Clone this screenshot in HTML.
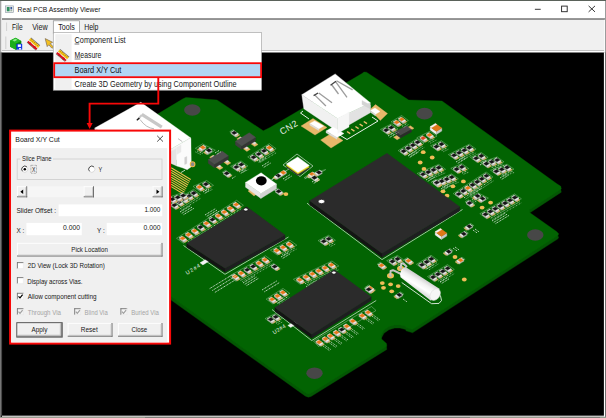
<!DOCTYPE html>
<html><head><meta charset="utf-8"><title>Real PCB Assembly Viewer</title>
<style>
html,body{margin:0;padding:0;background:#000;}
body{width:606px;height:418px;overflow:hidden;position:relative;font-family:"Liberation Sans",sans-serif;}
svg{position:absolute;left:0;top:0;display:block}
svg text{font-family:"Liberation Sans",sans-serif;}
</style></head><body>
<svg width="606" height="418" viewBox="0 0 606 418">
<rect x="0" y="0" width="606" height="418" fill="#000"/>
<g id="pcb">
<polygon points="362.0,76.7 364.0,75.2 366.5,75.4 408.7,103.2 442.0,104.2 556.5,186.7 560.8,189.5 561.3,192.2 529.6,213.0 529.6,215.7 556.5,234.7 558.7,236.9 558.0,238.8 412.6,332.8 406.0,330.8 405.6,329.5 400.0,328.1 394.8,328.1 389.0,329.7 384.0,333.2 380.9,338.9 381.5,342.2 386.5,346.7 386.8,349.5 311.0,396.5 308.3,397.2 305.5,396.2 171.7,300.5 60.0,221.2 100.0,150.2 159.7,116.0 183.0,102.0 186.0,100.6 217.0,103.2 263.3,134.0 270.0,130.7" fill="#045604" stroke="#045604" stroke-width="0.35" />
<polygon points="362.0,73.5 364.0,72.0 366.5,72.2 408.7,100.0 442.0,101.0 556.5,183.5 560.8,186.3 561.3,189.0 529.6,209.8 529.6,212.5 556.5,231.5 558.7,233.7 558.0,235.6 412.6,329.6 406.0,327.6 405.6,326.3 400.0,324.9 394.8,324.9 389.0,326.5 384.0,330.0 380.9,335.7 381.5,339.0 386.5,343.5 386.8,346.3 311.0,393.3 308.3,394.0 305.5,393.0 171.7,297.3 60.0,218.0 100.0,147.0 159.7,112.8 183.0,98.8 186.0,97.4 217.0,100.0 263.3,130.8 270.0,127.5" fill="#026402" stroke="#026402" stroke-width="0.35" />
<ellipse cx="192.3" cy="110.0" rx="8.2" ry="5.8" fill="#474747"/>
<ellipse cx="424.5" cy="113.6" rx="8.2" ry="5.8" fill="#474747"/>
<ellipse cx="535.3" cy="235.0" rx="8.2" ry="5.8" fill="#474747"/>
<ellipse cx="314.5" cy="373.2" rx="8.2" ry="5.8" fill="#474747"/>
<!--chips-->
<path d="M307.0 203.2 L382.0 259.6 L462.5 209.5" fill="none" stroke="#c4dcc4" stroke-width="0.8"/>
<path d="M183.5 245.5 L225.0 274.3 L288.5 237.0" fill="none" stroke="#c4dcc4" stroke-width="0.8"/>
<path d="M272.0 309.5 L311.7 340.6 L376.2 300.5" fill="none" stroke="#c4dcc4" stroke-width="0.8"/>
<polygon points="301.0,126.0 313.0,118.5 327.0,127.5 315.0,135.0" fill="#e8b86a" stroke="#e8b86a" stroke-width="0.35" />
<polygon points="320.6,140.0 332.0,133.0 343.0,140.5 331.0,148.0" fill="#e8b86a" stroke="#e8b86a" stroke-width="0.35" />
<polygon points="370.0,109.5 375.5,104.6 387.5,113.6 380.3,120.5" fill="#e8b86a" stroke="#e8b86a" stroke-width="0.35" />
<path d="M303 111 L300.5 113 L309 119 M338 134 L347 139.5 L378 121 L372 117" stroke="#e8f0e8" stroke-width="1" fill="none"/>
<path d="M347.0 131.5 l3.2 2.2" stroke="#f0c070" stroke-width="1.4"/>
<path d="M351.2 129.0 l3.2 2.2" stroke="#f0c070" stroke-width="1.4"/>
<path d="M355.4 126.5 l3.2 2.2" stroke="#f0c070" stroke-width="1.4"/>
<path d="M359.6 124.0 l3.2 2.2" stroke="#f0c070" stroke-width="1.4"/>
<path d="M363.8 121.5 l3.2 2.2" stroke="#f0c070" stroke-width="1.4"/>
<polygon points="301.8,94.7 337.6,118.5 337.6,131.5 303.8,108.7" fill="#f1f1f1" stroke="#f1f1f1" stroke-width="0.35" />
<polygon points="337.6,118.5 370.3,102.7 370.3,112.7 337.6,131.5" fill="#e2e2e2" stroke="#e2e2e2" stroke-width="0.35" />
<polygon points="335.2,73.9 370.3,102.7 337.6,118.5 301.8,94.7" fill="#ffffff" stroke="#ffffff" stroke-width="0.35" />
<polygon points="309.8,123.5 314.7,120.9 323.7,126.1 318.7,128.9" fill="#ffffff" stroke="#ffffff" stroke-width="0.35" />
<polygon points="309.8,123.5 318.7,128.9 318.7,130.6 309.8,125.2" fill="#dcdcdc" stroke="#dcdcdc" stroke-width="0.35" />
<polygon points="326.0,131.0 333.0,127.0 344.0,133.5 337.0,137.5" fill="#ffffff" stroke="#ffffff" stroke-width="0.35" />
<polygon points="326.0,131.0 337.0,137.5 337.0,139.3 326.0,132.8" fill="#dcdcdc" stroke="#dcdcdc" stroke-width="0.35" />
<polygon points="337.6,118.5 349.0,112.0 349.0,127.0 337.6,133.5" fill="#f6f6f6" stroke="#f6f6f6" stroke-width="0.35" />
<polygon points="370.3,110.5 375.0,108.0 380.0,111.5 375.5,114.3" fill="#ffffff" stroke="#ffffff" stroke-width="0.35" />
<polygon points="370.3,110.5 375.5,114.3 375.5,116.0 370.3,112.2" fill="#d8d8d8" stroke="#d8d8d8" stroke-width="0.35" />
<path d="M314.6 94.9 L325.9 106.0" stroke="#9c9c9c" stroke-width="1.3" fill="none"/>
<path d="M318.8 92.9 L332.0 102.7" stroke="#9c9c9c" stroke-width="1.3" fill="none"/>
<path d="M331.5 84.5 L338.5 94.0" stroke="#9c9c9c" stroke-width="1.3" fill="none"/>
<path d="M335.4 81.3 L347.0 97.4" stroke="#9c9c9c" stroke-width="1.3" fill="none"/>
<path d="M336.5 80.8 L352.6 89.9" stroke="#9c9c9c" stroke-width="1.3" fill="none"/>
<path d="M313.6 95.6 l4.5 -2.6 M330.5 85.2 l5.5 -4" stroke="#444" stroke-width="1.3"/>
<polygon points="362.0,100.5 370.3,105.0 370.3,109.0 362.0,104.5" fill="#d4d4d4" stroke="#d4d4d4" stroke-width="0.35" />
<text x="0" y="0" transform="translate(282,135) rotate(-31)" font-family="Liberation Sans, sans-serif" font-size="9" fill="#e8f0e8" textLength="19">CN2</text>
<polygon points="94.8,128.0 145.0,164.0 145.0,178.0 94.8,142.0" fill="#ededed" stroke="#ededed" stroke-width="0.35" />
<polygon points="145.0,164.0 190.5,137.7 190.5,151.7 145.0,178.0" fill="#f2f2f2" stroke="#f2f2f2" stroke-width="0.35" />
<polygon points="140.8,102.3 190.5,137.7 145.0,164.0 94.8,128.0" fill="#ffffff" stroke="#ffffff" stroke-width="0.35" />
<polygon points="171.0,151.5 176.7,148.2 176.7,166.0 171.0,163.4" fill="#e4e4e4" stroke="#e4e4e4" stroke-width="0.35" />
<polygon points="176.7,147.0 190.9,138.3 191.3,166.8 187.2,169.7 183.0,168.0 176.7,166.0" fill="#fbfbfb" stroke="#fbfbfb" stroke-width="0.35" />
<polygon points="184.7,157.5 186.8,156.5 186.8,163.6 184.7,164.6" fill="#cfcfcf" stroke="#cfcfcf" stroke-width="0.35" />
<polygon points="176.7,147.5 181.0,145.0 181.0,152.0 176.7,154.5" fill="#e9e9e9" stroke="#e9e9e9" stroke-width="0.35" />
<path d="M178 138.6 L182.3 141.6" stroke="#bdbdbd" stroke-width="1" fill="none"/>
<path d="M180.9 172.6 L185.1 170.1" stroke="#e8f0e8" stroke-width="0.8" fill="none"/>
<path d="M141.8 114.3 L161.8 127.2" stroke="#c8c8c8" stroke-width="3.2" fill="none"/>
<path d="M138 119.3 L141.8 114.8" stroke="#c8c8c8" stroke-width="2" fill="none"/>
<path d="M136.8 120.3 l2.6 -2.4" stroke="#1a1a1a" stroke-width="1.3"/>
<path d="M140 119.5 Q146 128 154 128.8" stroke="#a8a8a8" stroke-width="0.8" fill="none"/>
<ellipse cx="192.6" cy="164.3" rx="2.3" ry="2.5" fill="#8a8a8a" stroke="#f0b848" stroke-width="1.1"/>
<path d="M171.2 167.8 l19.5 11.7" stroke="#f0bc50" stroke-width="1.05"/>
<path d="M171.2 170.2 l18.6 11.2" stroke="#f0bc50" stroke-width="1.05"/>
<path d="M171.2 172.5 l17.7 10.6" stroke="#f0bc50" stroke-width="1.05"/>
<path d="M171.2 174.9 l16.8 10.1" stroke="#f0bc50" stroke-width="1.05"/>
<path d="M171.2 177.2 l15.9 9.5" stroke="#f0bc50" stroke-width="1.05"/>
<path d="M171.2 179.6 l15.0 9.0" stroke="#f0bc50" stroke-width="1.05"/>
<path d="M171.2 181.9 l14.1 8.5" stroke="#f0bc50" stroke-width="1.05"/>
<path d="M171.2 184.2 l13.2 7.9" stroke="#f0bc50" stroke-width="1.05"/>
<path d="M171.2 186.6 l12.3 7.4" stroke="#f0bc50" stroke-width="1.05"/>
<defs><linearGradient id="cg" gradientUnits="userSpaceOnUse" x1="422.5" y1="277.8" x2="415.8" y2="289"><stop offset="0" stop-color="#cfcfcf"/><stop offset="0.35" stop-color="#f2f2f2"/><stop offset="0.7" stop-color="#ffffff"/><stop offset="1" stop-color="#e2e2e2"/></linearGradient></defs>
<path d="M401.7 282.5 L431.6 303.7 L439 303.4 L441.5 300.5 L440.4 295.4" stroke="#e8f0e8" stroke-width="0.9" fill="none"/>
<ellipse cx="390.5" cy="275.8" rx="3.5" ry="2.7" fill="#f0bc58"/><ellipse cx="390.5" cy="275.8" rx="1.5" ry="1.1" fill="#b8b8b8"/>
<ellipse cx="400.6" cy="268.4" rx="3.5" ry="2.7" fill="#f0bc58"/><ellipse cx="400.6" cy="268.4" rx="1.5" ry="1.1" fill="#b8b8b8"/>
<path d="M390.3 275.5 L390.6 271 L393 270.2 L402 274.5" stroke="#c4c4c4" stroke-width="2" fill="none" stroke-linejoin="round"/>
<path d="M400.6 268 L401.3 263.6 L403.2 263.2 L407 267" stroke="#c4c4c4" stroke-width="2" fill="none" stroke-linejoin="round"/>
<path d="M405.2 266.7 L439.8 289 L431 300.7 L400.5 277.3 Q398.5 270.5 405.2 266.7 Z" fill="url(#cg)"/>
<ellipse cx="435.2" cy="294.6" rx="4.6" ry="6.3" transform="rotate(35.4 435.2 294.6)" fill="#f6f6f6" stroke="#dcdcdc" stroke-width="0.5"/>
<polygon points="248.0,191.0 252.0,188.5 258.0,193.0 254.0,196.0" fill="#e8b86a" stroke="#e8b86a" stroke-width="0.35" />
<polygon points="245.5,182.4 260.9,193.6 260.9,198.4 245.5,187.2" fill="#e6e6e6" stroke="#e6e6e6" stroke-width="0.35" />
<polygon points="260.9,193.6 276.5,184.0 276.5,188.8 260.9,198.4" fill="#d2d2d2" stroke="#d2d2d2" stroke-width="0.35" />
<polygon points="261.1,172.8 276.5,184.0 260.9,193.6 245.5,182.4" fill="#ffffff" stroke="#ffffff" stroke-width="0.35" />
<ellipse cx="261.3" cy="180.8" rx="5.4" ry="4.6" fill="#000"/>
<polygon points="297.0,154.0 313.0,166.0 300.0,176.5 283.0,165.0" fill="none" stroke="#cfe0cf" stroke-width="0.7"/>
<polygon points="297.7,160.1 309.4,168.6 297.9,175.7 286.2,167.2" fill="#333" stroke="#333" stroke-width="0.35" />
<polygon points="297.7,158.5 309.4,167.0 297.9,174.1 286.2,165.6" fill="#e8d820" stroke="#e8d820" stroke-width="0.35" />
<polygon points="297.7,156.9 309.4,165.4 297.9,172.5 286.2,164.0" fill="#ffffff" stroke="#ffffff" stroke-width="0.35" />
<polygon points="240.2,136.8 244.1,139.6 240.7,141.7 236.8,138.9" fill="#e8b86a" stroke="#e8b86a" stroke-width="0.35" />
<polygon points="254.2,141.7 258.1,144.5 254.7,146.6 250.8,143.8" fill="#e8b86a" stroke="#e8b86a" stroke-width="0.35" />
<polygon points="246.4,146.5 250.3,149.3 246.9,151.4 243.0,148.6" fill="#e8b86a" stroke="#e8b86a" stroke-width="0.35" />
<polygon points="240.9,137.1 243.8,139.3 241.7,140.5 238.8,138.4" fill="#dcdcdc" stroke="#dcdcdc" stroke-width="0.35" />
<polygon points="253.3,141.0 256.3,143.1 254.2,144.4 251.3,142.3" fill="#dcdcdc" stroke="#dcdcdc" stroke-width="0.35" />
<polygon points="245.5,145.8 248.4,147.9 246.4,149.2 243.5,147.0" fill="#dcdcdc" stroke="#dcdcdc" stroke-width="0.35" />
<polygon points="235.4,141.3 241.7,145.9 241.7,149.5 235.4,144.9" fill="#3e3e3e" stroke="#3e3e3e" stroke-width="0.35" />
<polygon points="241.7,145.9 255.6,137.3 255.6,140.9 241.7,149.5" fill="#343434" stroke="#343434" stroke-width="0.35" />
<polygon points="249.3,132.7 255.6,137.3 241.7,145.9 235.4,141.3" fill="#4e4e4e" stroke="#4e4e4e" stroke-width="0.35" />
<polygon points="213.0,155.2 216.9,158.0 213.5,160.1 209.6,157.3" fill="#e8b86a" stroke="#e8b86a" stroke-width="0.35" />
<polygon points="227.0,160.1 230.9,162.9 227.5,165.0 223.6,162.2" fill="#e8b86a" stroke="#e8b86a" stroke-width="0.35" />
<polygon points="219.2,164.9 223.1,167.7 219.7,169.8 215.8,167.0" fill="#e8b86a" stroke="#e8b86a" stroke-width="0.35" />
<polygon points="213.7,155.5 216.6,157.7 214.5,158.9 211.6,156.8" fill="#dcdcdc" stroke="#dcdcdc" stroke-width="0.35" />
<polygon points="226.1,159.4 229.1,161.5 227.0,162.8 224.1,160.7" fill="#dcdcdc" stroke="#dcdcdc" stroke-width="0.35" />
<polygon points="218.3,164.2 221.2,166.3 219.2,167.6 216.3,165.4" fill="#dcdcdc" stroke="#dcdcdc" stroke-width="0.35" />
<polygon points="208.2,159.7 214.5,164.3 214.5,167.9 208.2,163.3" fill="#3e3e3e" stroke="#3e3e3e" stroke-width="0.35" />
<polygon points="214.5,164.3 228.4,155.7 228.4,159.3 214.5,167.9" fill="#343434" stroke="#343434" stroke-width="0.35" />
<polygon points="222.1,151.1 228.4,155.7 214.5,164.3 208.2,159.7" fill="#4e4e4e" stroke="#4e4e4e" stroke-width="0.35" />
<polygon points="396.9,135.2 400.5,137.8 397.1,139.8 393.5,137.2" fill="#e8b86a" stroke="#e8b86a" stroke-width="0.35" />
<polygon points="410.4,125.7 414.0,128.3 410.6,130.3 407.0,127.7" fill="#e8b86a" stroke="#e8b86a" stroke-width="0.35" />
<polygon points="395.5,131.5 406.5,125.8 411.5,129.5 400.5,135.6" fill="#4a4a4a" stroke="#4a4a4a" stroke-width="0.35" />
<polygon points="395.5,131.5 400.5,135.6 400.5,138.0 395.5,134.0" fill="#333" stroke="#333" stroke-width="0.35" />
<polygon points="400.5,135.6 411.5,129.5 411.5,132.0 400.5,138.0" fill="#2b2b2b" stroke="#2b2b2b" stroke-width="0.35" />
<polygon points="430.2,126.9 436.4,131.4 436.4,134.4 430.2,129.9" fill="#f0f0f0" stroke="#f0f0f0" stroke-width="0.35" />
<polygon points="436.4,131.4 441.8,128.1 441.8,131.1 436.4,134.4" fill="#c8c8c8" stroke="#c8c8c8" stroke-width="0.35" />
<polygon points="435.6,123.6 441.8,128.1 436.4,131.4 430.2,126.9" fill="#e07818" stroke="#e07818" stroke-width="0.35" />
<polygon points="435.4,123.4 436.8,124.5 431.4,127.8 430.0,126.7" fill="#f4f4f4" stroke="#f4f4f4" stroke-width="0.35" />
<polygon points="435.2,231.9 441.4,236.4 441.4,239.4 435.2,234.9" fill="#f0f0f0" stroke="#f0f0f0" stroke-width="0.35" />
<polygon points="441.4,236.4 446.8,233.1 446.8,236.1 441.4,239.4" fill="#c8c8c8" stroke="#c8c8c8" stroke-width="0.35" />
<polygon points="440.6,228.6 446.8,233.1 441.4,236.4 435.2,231.9" fill="#e07818" stroke="#e07818" stroke-width="0.35" />
<polygon points="440.4,228.4 441.8,229.5 436.4,232.8 435.0,231.7" fill="#f4f4f4" stroke="#f4f4f4" stroke-width="0.35" />
<polygon points="202.5,143.9 215.3,150.2 208.1,154.6 195.3,148.3" fill="none" stroke="#cfe6cf" stroke-opacity="0.55" stroke-width="0.6"/>
<polygon points="199.7,148.1 202.4,150.1 200.2,151.4 197.5,149.4" fill="#e8b050" stroke="#e8b050" stroke-width="0.35" />
<polygon points="203.5,146.4 206.3,148.4 201.5,151.4 198.7,149.4" fill="#b8b8b0" stroke="#b8b8b0" stroke-width="0.35" />
<polygon points="203.5,145.1 206.3,147.1 201.5,150.1 198.7,148.1" fill="#ececec" stroke="#ececec" stroke-width="0.35" />
<polygon points="202.8,145.6 205.5,147.6 202.8,149.3 200.1,147.2" fill="#e8781a" stroke="#e8781a" stroke-width="0.35" />
<polygon points="205.8,151.1 208.5,153.1 206.3,154.4 203.6,152.4" fill="#e8b050" stroke="#e8b050" stroke-width="0.35" />
<polygon points="209.6,149.4 212.4,151.4 207.6,154.4 204.8,152.4" fill="#b8b8b0" stroke="#b8b8b0" stroke-width="0.35" />
<polygon points="209.6,148.1 212.4,150.1 207.6,153.1 204.8,151.1" fill="#ececec" stroke="#ececec" stroke-width="0.35" />
<polygon points="208.9,148.6 211.6,150.6 208.9,152.3 206.2,150.2" fill="#151515" stroke="#151515" stroke-width="0.35" />
<path d="M197.1 150.9 L203.2 153.9" stroke="#e4efe4" stroke-opacity="0.75" stroke-width="1" stroke-dasharray="1.2 0.8 0.6 0.8" fill="none"/>
<path d="M195.4 151.9 L201.5 154.9" stroke="#e4efe4" stroke-opacity="0.55" stroke-width="1" stroke-dasharray="1.2 0.8 0.6 0.8" fill="none"/>
<polygon points="229.8,131.7 232.9,129.7 239.7,134.7 236.5,136.6" fill="none" stroke="#cfe6cf" stroke-opacity="0.55" stroke-width="0.6"/>
<polygon points="237.3,133.7 239.4,135.2 236.5,137.0 234.4,135.5" fill="#e8b050" stroke="#e8b050" stroke-width="0.35" />
<polygon points="233.6,131.7 238.3,135.1 235.4,136.9 230.7,133.5" fill="#b8b8b0" stroke="#b8b8b0" stroke-width="0.35" />
<polygon points="233.6,130.4 238.3,133.8 235.4,135.6 230.7,132.2" fill="#ececec" stroke="#ececec" stroke-width="0.35" />
<polygon points="234.4,131.0 237.0,132.9 234.1,134.6 231.5,132.7" fill="#151515" stroke="#151515" stroke-width="0.35" />
<polygon points="247.7,156.9 269.3,143.7 276.1,148.7 254.5,161.8" fill="none" stroke="#cfe6cf" stroke-opacity="0.55" stroke-width="0.6"/>
<polygon points="256.6,158.1 258.7,159.6 255.8,161.4 253.7,159.9" fill="#e8b050" stroke="#e8b050" stroke-width="0.35" />
<polygon points="252.9,156.1 257.6,159.5 254.7,161.3 250.0,157.9" fill="#b8b8b0" stroke="#b8b8b0" stroke-width="0.35" />
<polygon points="252.9,154.8 257.6,158.2 254.7,160.0 250.0,156.6" fill="#ececec" stroke="#ececec" stroke-width="0.35" />
<polygon points="253.7,155.4 256.3,157.3 253.4,159.0 250.8,157.1" fill="#151515" stroke="#151515" stroke-width="0.35" />
<polygon points="261.9,154.9 264.0,156.4 261.1,158.2 259.0,156.7" fill="#e8b050" stroke="#e8b050" stroke-width="0.35" />
<polygon points="258.2,152.9 262.8,156.3 259.9,158.1 255.3,154.7" fill="#b8b8b0" stroke="#b8b8b0" stroke-width="0.35" />
<polygon points="258.2,151.6 262.8,155.0 259.9,156.8 255.3,153.4" fill="#ececec" stroke="#ececec" stroke-width="0.35" />
<polygon points="258.9,152.2 261.5,154.1 258.6,155.8 256.1,153.9" fill="#151515" stroke="#151515" stroke-width="0.35" />
<polygon points="267.1,151.7 269.3,153.2 266.4,155.0 264.3,153.5" fill="#e8b050" stroke="#e8b050" stroke-width="0.35" />
<polygon points="263.5,149.7 268.1,153.1 265.2,154.9 260.6,151.5" fill="#b8b8b0" stroke="#b8b8b0" stroke-width="0.35" />
<polygon points="263.5,148.4 268.1,151.8 265.2,153.6 260.6,150.2" fill="#ececec" stroke="#ececec" stroke-width="0.35" />
<polygon points="264.2,149.0 266.8,150.9 263.9,152.6 261.3,150.7" fill="#151515" stroke="#151515" stroke-width="0.35" />
<polygon points="272.4,148.5 274.5,150.0 271.6,151.8 269.5,150.3" fill="#e8b050" stroke="#e8b050" stroke-width="0.35" />
<polygon points="268.7,146.5 273.4,149.9 270.5,151.7 265.8,148.3" fill="#b8b8b0" stroke="#b8b8b0" stroke-width="0.35" />
<polygon points="268.7,145.2 273.4,148.6 270.5,150.4 265.8,147.0" fill="#ececec" stroke="#ececec" stroke-width="0.35" />
<polygon points="269.5,145.8 272.1,147.7 269.2,149.4 266.6,147.5" fill="#e8781a" stroke="#e8781a" stroke-width="0.35" />
<path d="M258.9 161.1 L274.7 151.5" stroke="#e4efe4" stroke-opacity="0.75" stroke-width="1" stroke-dasharray="1.2 0.8 0.6 0.8" fill="none"/>
<path d="M260.5 162.3 L276.3 152.7" stroke="#e4efe4" stroke-opacity="0.55" stroke-width="1" stroke-dasharray="1.2 0.8 0.6 0.8" fill="none"/>
<polygon points="230.6,166.3 241.1,161.0 247.9,166.0 237.4,171.2" fill="none" stroke="#cfe6cf" stroke-opacity="0.55" stroke-width="0.6"/>
<polygon points="239.3,167.9 241.4,169.4 238.5,171.2 236.4,169.7" fill="#e8b050" stroke="#e8b050" stroke-width="0.35" />
<polygon points="235.6,165.9 240.3,169.3 237.4,171.1 232.7,167.7" fill="#b8b8b0" stroke="#b8b8b0" stroke-width="0.35" />
<polygon points="235.6,164.6 240.3,168.0 237.4,169.8 232.7,166.4" fill="#ececec" stroke="#ececec" stroke-width="0.35" />
<polygon points="236.4,165.2 239.0,167.1 236.1,168.8 233.5,166.9" fill="#151515" stroke="#151515" stroke-width="0.35" />
<polygon points="244.3,165.4 246.4,166.9 243.5,168.7 241.4,167.2" fill="#e8b050" stroke="#e8b050" stroke-width="0.35" />
<polygon points="240.6,163.4 245.3,166.8 242.4,168.6 237.7,165.2" fill="#b8b8b0" stroke="#b8b8b0" stroke-width="0.35" />
<polygon points="240.6,162.1 245.3,165.5 242.4,167.3 237.7,163.9" fill="#ececec" stroke="#ececec" stroke-width="0.35" />
<polygon points="241.4,162.7 244.0,164.6 241.1,166.3 238.5,164.4" fill="#151515" stroke="#151515" stroke-width="0.35" />
<path d="M241.6 170.9 L246.6 168.4" stroke="#e4efe4" stroke-opacity="0.75" stroke-width="1" stroke-dasharray="1.2 0.8 0.6 0.8" fill="none"/>
<path d="M243.2 172.1 L248.2 169.6" stroke="#e4efe4" stroke-opacity="0.55" stroke-width="1" stroke-dasharray="1.2 0.8 0.6 0.8" fill="none"/>
<polygon points="222.3,172.2 225.4,170.2 232.2,175.2 229.0,177.1" fill="none" stroke="#cfe6cf" stroke-opacity="0.55" stroke-width="0.6"/>
<polygon points="229.8,174.2 231.9,175.7 229.0,177.5 226.9,176.0" fill="#e8b050" stroke="#e8b050" stroke-width="0.35" />
<polygon points="226.1,172.2 230.8,175.6 227.9,177.4 223.2,174.0" fill="#b8b8b0" stroke="#b8b8b0" stroke-width="0.35" />
<polygon points="226.1,170.9 230.8,174.3 227.9,176.1 223.2,172.7" fill="#ececec" stroke="#ececec" stroke-width="0.35" />
<polygon points="226.9,171.5 229.5,173.4 226.6,175.1 224.0,173.2" fill="#151515" stroke="#151515" stroke-width="0.35" />
<polygon points="193.0,186.4 206.7,180.5 213.5,185.4 199.8,191.4" fill="none" stroke="#cfe6cf" stroke-opacity="0.55" stroke-width="0.6"/>
<polygon points="202.6,187.9 204.7,189.4 201.8,191.2 199.7,189.7" fill="#e8b050" stroke="#e8b050" stroke-width="0.35" />
<polygon points="198.9,185.9 203.5,189.3 200.6,191.0 196.0,187.7" fill="#b8b8b0" stroke="#b8b8b0" stroke-width="0.35" />
<polygon points="198.9,184.6 203.5,188.0 200.6,189.7 196.0,186.4" fill="#ececec" stroke="#ececec" stroke-width="0.35" />
<polygon points="199.6,185.1 202.2,187.0 199.3,188.8 196.7,186.9" fill="#e8781a" stroke="#e8781a" stroke-width="0.35" />
<polygon points="209.1,185.0 211.2,186.6 208.3,188.3 206.2,186.8" fill="#e8b050" stroke="#e8b050" stroke-width="0.35" />
<polygon points="205.4,183.1 210.0,186.4 207.1,188.2 202.5,184.8" fill="#b8b8b0" stroke="#b8b8b0" stroke-width="0.35" />
<polygon points="205.4,181.8 210.0,185.1 207.1,186.9 202.5,183.5" fill="#ececec" stroke="#ececec" stroke-width="0.35" />
<polygon points="206.1,182.3 208.7,184.2 205.8,186.0 203.2,184.1" fill="#151515" stroke="#151515" stroke-width="0.35" />
<path d="M204.9 190.9 L211.4 188.0" stroke="#e4efe4" stroke-opacity="0.75" stroke-width="1" stroke-dasharray="1.2 0.8 0.6 0.8" fill="none"/>
<path d="M206.5 192.1 L213.0 189.2" stroke="#e4efe4" stroke-opacity="0.55" stroke-width="1" stroke-dasharray="1.2 0.8 0.6 0.8" fill="none"/>
<polygon points="168.8,204.6 193.6,189.3 200.4,194.3 175.6,209.5" fill="none" stroke="#cfe6cf" stroke-opacity="0.55" stroke-width="0.6"/>
<polygon points="177.5,206.0 179.6,207.5 176.7,209.3 174.6,207.7" fill="#e8b050" stroke="#e8b050" stroke-width="0.35" />
<polygon points="173.8,204.0 178.4,207.3 175.5,209.1 170.9,205.7" fill="#b8b8b0" stroke="#b8b8b0" stroke-width="0.35" />
<polygon points="173.8,202.7 178.4,206.0 175.5,207.8 170.9,204.4" fill="#ececec" stroke="#ececec" stroke-width="0.35" />
<polygon points="174.5,203.2 177.1,205.1 174.2,206.9 171.6,205.0" fill="#151515" stroke="#151515" stroke-width="0.35" />
<polygon points="182.3,203.0 184.4,204.5 181.5,206.3 179.4,204.7" fill="#e8b050" stroke="#e8b050" stroke-width="0.35" />
<polygon points="178.6,201.0 183.3,204.3 180.4,206.1 175.7,202.7" fill="#b8b8b0" stroke="#b8b8b0" stroke-width="0.35" />
<polygon points="178.6,199.7 183.3,203.0 180.4,204.8 175.7,201.4" fill="#ececec" stroke="#ececec" stroke-width="0.35" />
<polygon points="179.4,200.2 182.0,202.1 179.1,203.9 176.5,202.0" fill="#151515" stroke="#151515" stroke-width="0.35" />
<polygon points="187.2,200.0 189.3,201.5 186.4,203.3 184.3,201.7" fill="#e8b050" stroke="#e8b050" stroke-width="0.35" />
<polygon points="183.5,198.0 188.1,201.3 185.2,203.1 180.6,199.8" fill="#b8b8b0" stroke="#b8b8b0" stroke-width="0.35" />
<polygon points="183.5,196.7 188.1,200.0 185.2,201.8 180.6,198.5" fill="#ececec" stroke="#ececec" stroke-width="0.35" />
<polygon points="184.2,197.2 186.8,199.1 183.9,200.9 181.3,199.0" fill="#151515" stroke="#151515" stroke-width="0.35" />
<polygon points="192.0,197.0 194.1,198.5 191.2,200.3 189.1,198.7" fill="#e8b050" stroke="#e8b050" stroke-width="0.35" />
<polygon points="188.3,195.0 193.0,198.4 190.1,200.1 185.4,196.8" fill="#b8b8b0" stroke="#b8b8b0" stroke-width="0.35" />
<polygon points="188.3,193.7 193.0,197.1 190.1,198.8 185.4,195.5" fill="#ececec" stroke="#ececec" stroke-width="0.35" />
<polygon points="189.1,194.2 191.7,196.1 188.8,197.9 186.2,196.0" fill="#151515" stroke="#151515" stroke-width="0.35" />
<polygon points="196.9,194.0 199.0,195.5 196.1,197.3 194.0,195.7" fill="#e8b050" stroke="#e8b050" stroke-width="0.35" />
<polygon points="193.2,192.0 197.8,195.4 194.9,197.1 190.3,193.8" fill="#b8b8b0" stroke="#b8b8b0" stroke-width="0.35" />
<polygon points="193.2,190.7 197.8,194.1 194.9,195.8 190.3,192.5" fill="#ececec" stroke="#ececec" stroke-width="0.35" />
<polygon points="193.9,191.2 196.5,193.1 193.6,194.9 191.0,193.0" fill="#151515" stroke="#151515" stroke-width="0.35" />
<path d="M179.8 209.0 L199.2 197.0" stroke="#e4efe4" stroke-opacity="0.75" stroke-width="1" stroke-dasharray="1.2 0.8 0.6 0.8" fill="none"/>
<path d="M181.4 210.1 L200.8 198.2" stroke="#e4efe4" stroke-opacity="0.55" stroke-width="1" stroke-dasharray="1.2 0.8 0.6 0.8" fill="none"/>
<polygon points="176.5,238.3 236.6,200.3 243.4,205.3 183.3,243.2" fill="none" stroke="#cfe6cf" stroke-opacity="0.55" stroke-width="0.6"/>
<polygon points="185.7,239.2 187.8,240.7 184.9,242.5 182.8,241.0" fill="#e8b050" stroke="#e8b050" stroke-width="0.35" />
<polygon points="182.0,237.2 186.7,240.6 183.8,242.4 179.1,239.0" fill="#b8b8b0" stroke="#b8b8b0" stroke-width="0.35" />
<polygon points="182.0,235.9 186.7,239.3 183.8,241.1 179.1,237.7" fill="#ececec" stroke="#ececec" stroke-width="0.35" />
<polygon points="182.8,236.5 185.4,238.4 182.5,240.1 179.9,238.2" fill="#e8781a" stroke="#e8781a" stroke-width="0.35" />
<polygon points="191.7,235.5 193.8,237.0 190.9,238.8 188.8,237.2" fill="#e8b050" stroke="#e8b050" stroke-width="0.35" />
<polygon points="188.0,233.5 192.6,236.8 189.7,238.6 185.1,235.2" fill="#b8b8b0" stroke="#b8b8b0" stroke-width="0.35" />
<polygon points="188.0,232.2 192.6,235.5 189.7,237.3 185.1,233.9" fill="#ececec" stroke="#ececec" stroke-width="0.35" />
<polygon points="188.7,232.7 191.3,234.6 188.4,236.4 185.8,234.5" fill="#e8781a" stroke="#e8781a" stroke-width="0.35" />
<polygon points="197.6,231.7 199.7,233.2 196.8,235.0 194.7,233.5" fill="#e8b050" stroke="#e8b050" stroke-width="0.35" />
<polygon points="193.9,229.7 198.6,233.1 195.7,234.9 191.1,231.5" fill="#b8b8b0" stroke="#b8b8b0" stroke-width="0.35" />
<polygon points="193.9,228.4 198.6,231.8 195.7,233.6 191.1,230.2" fill="#ececec" stroke="#ececec" stroke-width="0.35" />
<polygon points="194.7,229.0 197.3,230.8 194.4,232.6 191.8,230.7" fill="#e8781a" stroke="#e8781a" stroke-width="0.35" />
<polygon points="203.6,227.9 205.7,229.5 202.8,231.2 200.7,229.7" fill="#e8b050" stroke="#e8b050" stroke-width="0.35" />
<polygon points="199.9,226.0 204.5,229.3 201.6,231.1 197.0,227.7" fill="#b8b8b0" stroke="#b8b8b0" stroke-width="0.35" />
<polygon points="199.9,224.7 204.5,228.0 201.6,229.8 197.0,226.4" fill="#ececec" stroke="#ececec" stroke-width="0.35" />
<polygon points="200.6,225.2 203.2,227.1 200.3,228.9 197.8,227.0" fill="#151515" stroke="#151515" stroke-width="0.35" />
<polygon points="209.5,224.2 211.6,225.7 208.8,227.5 206.6,226.0" fill="#e8b050" stroke="#e8b050" stroke-width="0.35" />
<polygon points="205.9,222.2 210.5,225.6 207.6,227.3 203.0,224.0" fill="#b8b8b0" stroke="#b8b8b0" stroke-width="0.35" />
<polygon points="205.9,220.9 210.5,224.3 207.6,226.0 203.0,222.7" fill="#ececec" stroke="#ececec" stroke-width="0.35" />
<polygon points="206.6,221.5 209.2,223.3 206.3,225.1 203.7,223.2" fill="#e8781a" stroke="#e8781a" stroke-width="0.35" />
<polygon points="215.5,220.4 217.6,222.0 214.7,223.7 212.6,222.2" fill="#e8b050" stroke="#e8b050" stroke-width="0.35" />
<polygon points="211.8,218.5 216.4,221.8 213.5,223.6 208.9,220.2" fill="#b8b8b0" stroke="#b8b8b0" stroke-width="0.35" />
<polygon points="211.8,217.2 216.4,220.5 213.5,222.3 208.9,218.9" fill="#ececec" stroke="#ececec" stroke-width="0.35" />
<polygon points="212.6,217.7 215.1,219.6 212.2,221.3 209.7,219.5" fill="#151515" stroke="#151515" stroke-width="0.35" />
<polygon points="221.4,216.7 223.6,218.2 220.7,220.0 218.6,218.4" fill="#e8b050" stroke="#e8b050" stroke-width="0.35" />
<polygon points="217.8,214.7 222.4,218.1 219.5,219.8 214.9,216.5" fill="#b8b8b0" stroke="#b8b8b0" stroke-width="0.35" />
<polygon points="217.8,213.4 222.4,216.8 219.5,218.5 214.9,215.2" fill="#ececec" stroke="#ececec" stroke-width="0.35" />
<polygon points="218.5,213.9 221.1,215.8 218.2,217.6 215.6,215.7" fill="#e8781a" stroke="#e8781a" stroke-width="0.35" />
<polygon points="227.4,212.9 229.5,214.5 226.6,216.2 224.5,214.7" fill="#e8b050" stroke="#e8b050" stroke-width="0.35" />
<polygon points="223.7,210.9 228.3,214.3 225.5,216.1 220.8,212.7" fill="#b8b8b0" stroke="#b8b8b0" stroke-width="0.35" />
<polygon points="223.7,209.6 228.3,213.0 225.5,214.8 220.8,211.4" fill="#ececec" stroke="#ececec" stroke-width="0.35" />
<polygon points="224.5,210.2 227.0,212.1 224.2,213.8 221.6,212.0" fill="#e8781a" stroke="#e8781a" stroke-width="0.35" />
<polygon points="233.4,209.2 235.5,210.7 232.6,212.5 230.5,210.9" fill="#e8b050" stroke="#e8b050" stroke-width="0.35" />
<polygon points="229.7,207.2 234.3,210.6 231.4,212.3 226.8,209.0" fill="#b8b8b0" stroke="#b8b8b0" stroke-width="0.35" />
<polygon points="229.7,205.9 234.3,209.3 231.4,211.0 226.8,207.7" fill="#ececec" stroke="#ececec" stroke-width="0.35" />
<polygon points="230.4,206.4 233.0,208.3 230.1,210.1 227.5,208.2" fill="#e8781a" stroke="#e8781a" stroke-width="0.35" />
<polygon points="239.3,205.4 241.4,206.9 238.5,208.7 236.4,207.2" fill="#e8b050" stroke="#e8b050" stroke-width="0.35" />
<polygon points="235.6,203.4 240.3,206.8 237.4,208.6 232.7,205.2" fill="#b8b8b0" stroke="#b8b8b0" stroke-width="0.35" />
<polygon points="235.6,202.1 240.3,205.5 237.4,207.3 232.7,203.9" fill="#ececec" stroke="#ececec" stroke-width="0.35" />
<polygon points="236.4,202.7 239.0,204.6 236.1,206.3 233.5,204.4" fill="#e8781a" stroke="#e8781a" stroke-width="0.35" />
<path d="M188.0 242.2 L241.6 208.4" stroke="#e4efe4" stroke-opacity="0.75" stroke-width="1" stroke-dasharray="1.2 0.8 0.6 0.8" fill="none"/>
<path d="M189.6 243.4 L243.2 209.6" stroke="#e4efe4" stroke-opacity="0.55" stroke-width="1" stroke-dasharray="1.2 0.8 0.6 0.8" fill="none"/>
<polygon points="166.5,198.0 183.2,192.4 190.0,197.4 173.3,202.9" fill="none" stroke="#cfe6cf" stroke-opacity="0.55" stroke-width="0.6"/>
<polygon points="175.4,200.0 177.5,201.6 174.6,203.3 172.5,201.8" fill="#e8b050" stroke="#e8b050" stroke-width="0.35" />
<polygon points="171.7,198.0 176.3,201.4 173.5,203.2 168.8,199.8" fill="#b8b8b0" stroke="#b8b8b0" stroke-width="0.35" />
<polygon points="171.7,196.7 176.3,200.1 173.5,201.9 168.8,198.5" fill="#ececec" stroke="#ececec" stroke-width="0.35" />
<polygon points="172.5,197.3 175.1,199.2 172.2,200.9 169.6,199.0" fill="#151515" stroke="#151515" stroke-width="0.35" />
<polygon points="180.8,198.2 182.9,199.7 180.0,201.5 177.9,200.0" fill="#e8b050" stroke="#e8b050" stroke-width="0.35" />
<polygon points="177.1,196.2 181.8,199.6 178.9,201.4 174.2,198.0" fill="#b8b8b0" stroke="#b8b8b0" stroke-width="0.35" />
<polygon points="177.1,194.9 181.8,198.3 178.9,200.1 174.2,196.7" fill="#ececec" stroke="#ececec" stroke-width="0.35" />
<polygon points="177.9,195.5 180.5,197.4 177.6,199.1 175.0,197.2" fill="#151515" stroke="#151515" stroke-width="0.35" />
<polygon points="186.2,196.4 188.3,197.9 185.4,199.7 183.3,198.2" fill="#e8b050" stroke="#e8b050" stroke-width="0.35" />
<polygon points="182.5,194.4 187.2,197.8 184.3,199.6 179.7,196.2" fill="#b8b8b0" stroke="#b8b8b0" stroke-width="0.35" />
<polygon points="182.5,193.1 187.2,196.5 184.3,198.3 179.7,194.9" fill="#ececec" stroke="#ececec" stroke-width="0.35" />
<polygon points="183.3,193.7 185.9,195.6 183.0,197.3 180.4,195.4" fill="#151515" stroke="#151515" stroke-width="0.35" />
<path d="M177.7 203.0 L188.5 199.4" stroke="#e4efe4" stroke-opacity="0.75" stroke-width="1" stroke-dasharray="1.2 0.8 0.6 0.8" fill="none"/>
<path d="M179.3 204.2 L190.1 200.6" stroke="#e4efe4" stroke-opacity="0.55" stroke-width="1" stroke-dasharray="1.2 0.8 0.6 0.8" fill="none"/>
<polygon points="289.0,169.0 278.5,175.5 271.3,179.8 281.8,173.3" fill="none" stroke="#cfe6cf" stroke-opacity="0.55" stroke-width="0.6"/>
<polygon points="280.1,173.2 282.8,175.2 280.6,176.5 277.9,174.5" fill="#e8b050" stroke="#e8b050" stroke-width="0.35" />
<polygon points="283.9,171.5 286.7,173.5 281.9,176.5 279.1,174.5" fill="#b8b8b0" stroke="#b8b8b0" stroke-width="0.35" />
<polygon points="283.9,170.2 286.7,172.2 281.9,175.2 279.1,173.2" fill="#ececec" stroke="#ececec" stroke-width="0.35" />
<polygon points="283.2,170.7 285.9,172.7 283.2,174.4 280.5,172.3" fill="#e8781a" stroke="#e8781a" stroke-width="0.35" />
<polygon points="275.1,176.3 277.8,178.3 275.6,179.6 272.9,177.6" fill="#e8b050" stroke="#e8b050" stroke-width="0.35" />
<polygon points="278.9,174.6 281.7,176.6 276.9,179.6 274.1,177.6" fill="#b8b8b0" stroke="#b8b8b0" stroke-width="0.35" />
<polygon points="278.9,173.3 281.7,175.3 276.9,178.3 274.1,176.3" fill="#ececec" stroke="#ececec" stroke-width="0.35" />
<polygon points="278.2,173.8 280.9,175.8 278.2,177.5 275.5,175.4" fill="#151515" stroke="#151515" stroke-width="0.35" />
<path d="M277.5 176.0 L272.5 179.1" stroke="#e4efe4" stroke-opacity="0.75" stroke-width="1" stroke-dasharray="1.2 0.8 0.6 0.8" fill="none"/>
<path d="M275.8 177.0 L270.8 180.1" stroke="#e4efe4" stroke-opacity="0.55" stroke-width="1" stroke-dasharray="1.2 0.8 0.6 0.8" fill="none"/>
<polygon points="311.2,173.3 325.7,169.6 318.6,173.9 304.1,177.6" fill="none" stroke="#cfe6cf" stroke-opacity="0.55" stroke-width="0.6"/>
<polygon points="308.9,174.8 311.7,176.8 309.4,178.2 306.7,176.2" fill="#e8b050" stroke="#e8b050" stroke-width="0.35" />
<polygon points="312.8,173.2 315.5,175.2 310.7,178.1 307.9,176.1" fill="#b8b8b0" stroke="#b8b8b0" stroke-width="0.35" />
<polygon points="312.8,171.9 315.5,173.9 310.7,176.8 307.9,174.8" fill="#ececec" stroke="#ececec" stroke-width="0.35" />
<polygon points="312.0,172.3 314.7,174.3 312.0,176.0 309.3,174.0" fill="#e8781a" stroke="#e8781a" stroke-width="0.35" />
<polygon points="315.8,173.0 318.5,175.0 316.3,176.4 313.6,174.4" fill="#e8b050" stroke="#e8b050" stroke-width="0.35" />
<polygon points="319.6,171.4 322.4,173.4 317.5,176.3 314.8,174.3" fill="#b8b8b0" stroke="#b8b8b0" stroke-width="0.35" />
<polygon points="319.6,170.1 322.4,172.1 317.5,175.0 314.8,173.0" fill="#ececec" stroke="#ececec" stroke-width="0.35" />
<polygon points="318.9,170.6 321.6,172.6 318.9,174.2 316.1,172.2" fill="#151515" stroke="#151515" stroke-width="0.35" />
<path d="M306.4 177.6 L313.2 175.8" stroke="#e4efe4" stroke-opacity="0.75" stroke-width="1" stroke-dasharray="1.2 0.8 0.6 0.8" fill="none"/>
<path d="M304.7 178.7 L311.5 176.9" stroke="#e4efe4" stroke-opacity="0.55" stroke-width="1" stroke-dasharray="1.2 0.8 0.6 0.8" fill="none"/>
<polygon points="310.0,176.5 313.1,174.5 319.9,179.5 316.7,181.4" fill="none" stroke="#cfe6cf" stroke-opacity="0.55" stroke-width="0.6"/>
<polygon points="317.5,178.5 319.6,180.0 316.7,181.8 314.6,180.3" fill="#e8b050" stroke="#e8b050" stroke-width="0.35" />
<polygon points="313.8,176.5 318.5,179.9 315.6,181.7 310.9,178.3" fill="#b8b8b0" stroke="#b8b8b0" stroke-width="0.35" />
<polygon points="313.8,175.2 318.5,178.6 315.6,180.4 310.9,177.0" fill="#ececec" stroke="#ececec" stroke-width="0.35" />
<polygon points="314.6,175.8 317.2,177.7 314.3,179.4 311.7,177.5" fill="#151515" stroke="#151515" stroke-width="0.35" />
<polygon points="274.2,190.2 277.3,188.2 284.1,193.2 280.9,195.1" fill="none" stroke="#cfe6cf" stroke-opacity="0.55" stroke-width="0.6"/>
<polygon points="281.7,192.2 283.8,193.7 280.9,195.5 278.8,194.0" fill="#e8b050" stroke="#e8b050" stroke-width="0.35" />
<polygon points="278.0,190.2 282.7,193.6 279.8,195.4 275.1,192.0" fill="#b8b8b0" stroke="#b8b8b0" stroke-width="0.35" />
<polygon points="278.0,188.9 282.7,192.3 279.8,194.1 275.1,190.7" fill="#ececec" stroke="#ececec" stroke-width="0.35" />
<polygon points="278.8,189.5 281.4,191.4 278.5,193.1 275.9,191.2" fill="#151515" stroke="#151515" stroke-width="0.35" />
<polygon points="380.5,129.4 391.2,124.0 398.0,129.0 387.3,134.3" fill="none" stroke="#cfe6cf" stroke-opacity="0.55" stroke-width="0.6"/>
<polygon points="389.3,131.0 391.4,132.5 388.5,134.3 386.4,132.8" fill="#e8b050" stroke="#e8b050" stroke-width="0.35" />
<polygon points="385.6,129.0 390.2,132.4 387.3,134.1 382.7,130.8" fill="#b8b8b0" stroke="#b8b8b0" stroke-width="0.35" />
<polygon points="385.6,127.7 390.2,131.1 387.3,132.8 382.7,129.5" fill="#ececec" stroke="#ececec" stroke-width="0.35" />
<polygon points="386.3,128.2 388.9,130.1 386.0,131.9 383.4,130.0" fill="#151515" stroke="#151515" stroke-width="0.35" />
<polygon points="394.4,128.4 396.5,130.0 393.6,131.7 391.5,130.2" fill="#e8b050" stroke="#e8b050" stroke-width="0.35" />
<polygon points="390.7,126.5 395.3,129.8 392.4,131.6 387.8,128.2" fill="#b8b8b0" stroke="#b8b8b0" stroke-width="0.35" />
<polygon points="390.7,125.2 395.3,128.5 392.4,130.3 387.8,126.9" fill="#ececec" stroke="#ececec" stroke-width="0.35" />
<polygon points="391.4,125.7 394.0,127.6 391.1,129.3 388.5,127.5" fill="#151515" stroke="#151515" stroke-width="0.35" />
<path d="M391.6 134.0 L396.7 131.4" stroke="#e4efe4" stroke-opacity="0.75" stroke-width="1" stroke-dasharray="1.2 0.8 0.6 0.8" fill="none"/>
<path d="M393.2 135.2 L398.3 132.6" stroke="#e4efe4" stroke-opacity="0.55" stroke-width="1" stroke-dasharray="1.2 0.8 0.6 0.8" fill="none"/>
<polygon points="391.1,121.8 401.6,115.5 408.4,120.5 397.9,126.8" fill="none" stroke="#cfe6cf" stroke-opacity="0.55" stroke-width="0.6"/>
<polygon points="399.8,123.2 401.9,124.7 399.0,126.5 396.9,125.0" fill="#e8b050" stroke="#e8b050" stroke-width="0.35" />
<polygon points="396.1,121.2 400.8,124.6 397.9,126.4 393.2,123.0" fill="#b8b8b0" stroke="#b8b8b0" stroke-width="0.35" />
<polygon points="396.1,119.9 400.8,123.3 397.9,125.1 393.2,121.7" fill="#ececec" stroke="#ececec" stroke-width="0.35" />
<polygon points="396.9,120.5 399.5,122.4 396.6,124.1 394.0,122.2" fill="#e8781a" stroke="#e8781a" stroke-width="0.35" />
<polygon points="404.8,120.2 406.9,121.7 404.0,123.5 401.9,122.0" fill="#e8b050" stroke="#e8b050" stroke-width="0.35" />
<polygon points="401.1,118.2 405.8,121.6 402.9,123.4 398.2,120.0" fill="#b8b8b0" stroke="#b8b8b0" stroke-width="0.35" />
<polygon points="401.1,116.9 405.8,120.3 402.9,122.1 398.2,118.7" fill="#ececec" stroke="#ececec" stroke-width="0.35" />
<polygon points="401.9,117.5 404.5,119.4 401.6,121.1 399.0,119.2" fill="#e8781a" stroke="#e8781a" stroke-width="0.35" />
<path d="M402.1 126.2 L407.1 123.2" stroke="#e4efe4" stroke-opacity="0.75" stroke-width="1" stroke-dasharray="1.2 0.8 0.6 0.8" fill="none"/>
<path d="M403.7 127.4 L408.7 124.4" stroke="#e4efe4" stroke-opacity="0.55" stroke-width="1" stroke-dasharray="1.2 0.8 0.6 0.8" fill="none"/>
<polygon points="416.8,137.7 430.2,131.1 437.0,136.1 423.6,142.6" fill="none" stroke="#cfe6cf" stroke-opacity="0.55" stroke-width="0.6"/>
<polygon points="426.3,139.0 428.4,140.5 425.5,142.3 423.4,140.8" fill="#e8b050" stroke="#e8b050" stroke-width="0.35" />
<polygon points="422.6,137.0 427.2,140.4 424.3,142.1 419.7,138.8" fill="#b8b8b0" stroke="#b8b8b0" stroke-width="0.35" />
<polygon points="422.6,135.7 427.2,139.1 424.3,140.8 419.7,137.5" fill="#ececec" stroke="#ececec" stroke-width="0.35" />
<polygon points="423.3,136.2 425.9,138.1 423.0,139.9 420.5,138.0" fill="#d84a20" stroke="#d84a20" stroke-width="0.35" />
<polygon points="432.7,135.8 434.8,137.4 431.9,139.1 429.8,137.6" fill="#e8b050" stroke="#e8b050" stroke-width="0.35" />
<polygon points="429.0,133.9 433.6,137.2 430.7,139.0 426.1,135.6" fill="#b8b8b0" stroke="#b8b8b0" stroke-width="0.35" />
<polygon points="429.0,132.6 433.6,135.9 430.7,137.7 426.1,134.3" fill="#ececec" stroke="#ececec" stroke-width="0.35" />
<polygon points="429.7,133.1 432.3,135.0 429.4,136.8 426.8,134.9" fill="#e8781a" stroke="#e8781a" stroke-width="0.35" />
<path d="M428.6 142.0 L434.9 138.8" stroke="#e4efe4" stroke-opacity="0.75" stroke-width="1" stroke-dasharray="1.2 0.8 0.6 0.8" fill="none"/>
<path d="M430.2 143.2 L436.6 140.0" stroke="#e4efe4" stroke-opacity="0.55" stroke-width="1" stroke-dasharray="1.2 0.8 0.6 0.8" fill="none"/>
<polygon points="398.2,150.6 417.2,138.5 424.0,143.4 405.0,155.6" fill="none" stroke="#cfe6cf" stroke-opacity="0.55" stroke-width="0.6"/>
<polygon points="406.7,152.0 408.8,153.5 405.9,155.3 403.8,153.8" fill="#e8b050" stroke="#e8b050" stroke-width="0.35" />
<polygon points="403.0,150.0 407.7,153.4 404.8,155.2 400.1,151.8" fill="#b8b8b0" stroke="#b8b8b0" stroke-width="0.35" />
<polygon points="403.0,148.7 407.7,152.1 404.8,153.9 400.1,150.5" fill="#ececec" stroke="#ececec" stroke-width="0.35" />
<polygon points="403.8,149.3 406.4,151.2 403.5,152.9 400.9,151.0" fill="#151515" stroke="#151515" stroke-width="0.35" />
<polygon points="411.3,149.0 413.5,150.6 410.6,152.3 408.5,150.8" fill="#e8b050" stroke="#e8b050" stroke-width="0.35" />
<polygon points="407.7,147.1 412.3,150.4 409.4,152.2 404.8,148.8" fill="#b8b8b0" stroke="#b8b8b0" stroke-width="0.35" />
<polygon points="407.7,145.8 412.3,149.1 409.4,150.9 404.8,147.5" fill="#ececec" stroke="#ececec" stroke-width="0.35" />
<polygon points="408.4,146.3 411.0,148.2 408.1,150.0 405.5,148.1" fill="#151515" stroke="#151515" stroke-width="0.35" />
<polygon points="416.0,146.1 418.1,147.6 415.2,149.4 413.1,147.8" fill="#e8b050" stroke="#e8b050" stroke-width="0.35" />
<polygon points="412.3,144.1 416.9,147.5 414.0,149.2 409.4,145.9" fill="#b8b8b0" stroke="#b8b8b0" stroke-width="0.35" />
<polygon points="412.3,142.8 416.9,146.2 414.0,147.9 409.4,144.6" fill="#ececec" stroke="#ececec" stroke-width="0.35" />
<polygon points="413.0,143.3 415.6,145.2 412.7,147.0 410.2,145.1" fill="#151515" stroke="#151515" stroke-width="0.35" />
<polygon points="420.6,143.1 422.7,144.6 419.8,146.4 417.7,144.9" fill="#e8b050" stroke="#e8b050" stroke-width="0.35" />
<polygon points="416.9,141.1 421.6,144.5 418.7,146.3 414.0,142.9" fill="#b8b8b0" stroke="#b8b8b0" stroke-width="0.35" />
<polygon points="416.9,139.8 421.6,143.2 418.7,145.0 414.0,141.6" fill="#ececec" stroke="#ececec" stroke-width="0.35" />
<polygon points="417.7,140.4 420.3,142.3 417.4,144.0 414.8,142.1" fill="#151515" stroke="#151515" stroke-width="0.35" />
<path d="M409.0 155.0 L422.9 146.1" stroke="#e4efe4" stroke-opacity="0.75" stroke-width="1" stroke-dasharray="1.2 0.8 0.6 0.8" fill="none"/>
<path d="M410.6 156.2 L424.5 147.3" stroke="#e4efe4" stroke-opacity="0.55" stroke-width="1" stroke-dasharray="1.2 0.8 0.6 0.8" fill="none"/>
<polygon points="430.6,145.8 441.4,140.7 448.2,145.6 437.4,150.8" fill="none" stroke="#cfe6cf" stroke-opacity="0.55" stroke-width="0.6"/>
<polygon points="439.4,147.5 441.6,149.0 438.7,150.8 436.6,149.3" fill="#e8b050" stroke="#e8b050" stroke-width="0.35" />
<polygon points="435.8,145.5 440.4,148.9 437.5,150.7 432.9,147.3" fill="#b8b8b0" stroke="#b8b8b0" stroke-width="0.35" />
<polygon points="435.8,144.2 440.4,147.6 437.5,149.4 432.9,146.0" fill="#ececec" stroke="#ececec" stroke-width="0.35" />
<polygon points="436.5,144.8 439.1,146.6 436.2,148.4 433.6,146.5" fill="#151515" stroke="#151515" stroke-width="0.35" />
<polygon points="444.6,145.0 446.7,146.6 443.8,148.3 441.7,146.8" fill="#e8b050" stroke="#e8b050" stroke-width="0.35" />
<polygon points="440.9,143.0 445.5,146.4 442.6,148.2 438.0,144.8" fill="#b8b8b0" stroke="#b8b8b0" stroke-width="0.35" />
<polygon points="440.9,141.7 445.5,145.1 442.6,146.9 438.0,143.5" fill="#ececec" stroke="#ececec" stroke-width="0.35" />
<polygon points="441.6,142.3 444.2,144.2 441.3,145.9 438.8,144.1" fill="#151515" stroke="#151515" stroke-width="0.35" />
<path d="M441.7 150.5 L446.9 148.0" stroke="#e4efe4" stroke-opacity="0.75" stroke-width="1" stroke-dasharray="1.2 0.8 0.6 0.8" fill="none"/>
<path d="M443.4 151.7 L448.5 149.2" stroke="#e4efe4" stroke-opacity="0.55" stroke-width="1" stroke-dasharray="1.2 0.8 0.6 0.8" fill="none"/>
<polygon points="448.4,154.6 469.3,144.2 476.1,149.1 455.2,159.6" fill="none" stroke="#cfe6cf" stroke-opacity="0.55" stroke-width="0.6"/>
<polygon points="457.2,156.2 459.3,157.8 456.4,159.5 454.3,158.0" fill="#e8b050" stroke="#e8b050" stroke-width="0.35" />
<polygon points="453.5,154.3 458.1,157.6 455.2,159.4 450.6,156.0" fill="#b8b8b0" stroke="#b8b8b0" stroke-width="0.35" />
<polygon points="453.5,153.0 458.1,156.3 455.2,158.1 450.6,154.7" fill="#ececec" stroke="#ececec" stroke-width="0.35" />
<polygon points="454.2,153.5 456.8,155.4 453.9,157.1 451.3,155.3" fill="#151515" stroke="#151515" stroke-width="0.35" />
<polygon points="462.3,153.7 464.4,155.2 461.5,157.0 459.4,155.5" fill="#e8b050" stroke="#e8b050" stroke-width="0.35" />
<polygon points="458.6,151.7 463.2,155.1 460.3,156.8 455.7,153.5" fill="#b8b8b0" stroke="#b8b8b0" stroke-width="0.35" />
<polygon points="458.6,150.4 463.2,153.8 460.3,155.5 455.7,152.2" fill="#ececec" stroke="#ececec" stroke-width="0.35" />
<polygon points="459.3,150.9 461.9,152.8 459.0,154.6 456.4,152.7" fill="#151515" stroke="#151515" stroke-width="0.35" />
<polygon points="467.4,151.1 469.5,152.7 466.6,154.4 464.5,152.9" fill="#e8b050" stroke="#e8b050" stroke-width="0.35" />
<polygon points="463.7,149.2 468.3,152.5 465.4,154.3 460.8,150.9" fill="#b8b8b0" stroke="#b8b8b0" stroke-width="0.35" />
<polygon points="463.7,147.9 468.3,151.2 465.4,153.0 460.8,149.6" fill="#ececec" stroke="#ececec" stroke-width="0.35" />
<polygon points="464.4,148.4 467.0,150.3 464.1,152.0 461.5,150.2" fill="#151515" stroke="#151515" stroke-width="0.35" />
<polygon points="472.5,148.6 474.6,150.1 471.7,151.9 469.6,150.4" fill="#e8b050" stroke="#e8b050" stroke-width="0.35" />
<polygon points="468.8,146.6 473.4,150.0 470.5,151.7 465.9,148.4" fill="#b8b8b0" stroke="#b8b8b0" stroke-width="0.35" />
<polygon points="468.8,145.3 473.4,148.7 470.5,150.4 465.9,147.1" fill="#ececec" stroke="#ececec" stroke-width="0.35" />
<polygon points="469.5,145.8 472.1,147.7 469.2,149.5 466.6,147.6" fill="#151515" stroke="#151515" stroke-width="0.35" />
<path d="M459.5 159.2 L474.8 151.6" stroke="#e4efe4" stroke-opacity="0.75" stroke-width="1" stroke-dasharray="1.2 0.8 0.6 0.8" fill="none"/>
<path d="M461.1 160.4 L476.4 152.8" stroke="#e4efe4" stroke-opacity="0.55" stroke-width="1" stroke-dasharray="1.2 0.8 0.6 0.8" fill="none"/>
<polygon points="470.4,157.4 481.3,152.5 488.1,157.4 477.2,162.4" fill="none" stroke="#cfe6cf" stroke-opacity="0.55" stroke-width="0.6"/>
<polygon points="479.2,159.1 481.3,160.7 478.4,162.4 476.3,160.9" fill="#e8b050" stroke="#e8b050" stroke-width="0.35" />
<polygon points="475.5,157.2 480.2,160.5 477.3,162.3 472.6,158.9" fill="#b8b8b0" stroke="#b8b8b0" stroke-width="0.35" />
<polygon points="475.5,155.9 480.2,159.2 477.3,161.0 472.6,157.6" fill="#ececec" stroke="#ececec" stroke-width="0.35" />
<polygon points="476.3,156.4 478.9,158.3 476.0,160.0 473.4,158.2" fill="#151515" stroke="#151515" stroke-width="0.35" />
<polygon points="484.4,156.8 486.5,158.3 483.6,160.1 481.5,158.6" fill="#e8b050" stroke="#e8b050" stroke-width="0.35" />
<polygon points="480.7,154.8 485.4,158.2 482.5,159.9 477.8,156.6" fill="#b8b8b0" stroke="#b8b8b0" stroke-width="0.35" />
<polygon points="480.7,153.5 485.4,156.9 482.5,158.6 477.8,155.3" fill="#ececec" stroke="#ececec" stroke-width="0.35" />
<polygon points="481.5,154.1 484.1,155.9 481.2,157.7 478.6,155.8" fill="#151515" stroke="#151515" stroke-width="0.35" />
<path d="M481.5 162.1 L486.7 159.8" stroke="#e4efe4" stroke-opacity="0.75" stroke-width="1" stroke-dasharray="1.2 0.8 0.6 0.8" fill="none"/>
<path d="M483.1 163.3 L488.3 161.0" stroke="#e4efe4" stroke-opacity="0.55" stroke-width="1" stroke-dasharray="1.2 0.8 0.6 0.8" fill="none"/>
<polygon points="480.5,162.5 497.2,156.9 504.0,161.9 487.3,167.4" fill="none" stroke="#cfe6cf" stroke-opacity="0.55" stroke-width="0.6"/>
<polygon points="489.4,164.5 491.5,166.1 488.6,167.8 486.5,166.3" fill="#e8b050" stroke="#e8b050" stroke-width="0.35" />
<polygon points="485.7,162.5 490.3,165.9 487.5,167.7 482.8,164.3" fill="#b8b8b0" stroke="#b8b8b0" stroke-width="0.35" />
<polygon points="485.7,161.2 490.3,164.6 487.5,166.4 482.8,163.0" fill="#ececec" stroke="#ececec" stroke-width="0.35" />
<polygon points="486.5,161.8 489.1,163.7 486.2,165.4 483.6,163.5" fill="#151515" stroke="#151515" stroke-width="0.35" />
<polygon points="494.8,162.7 496.9,164.2 494.0,166.0 491.9,164.5" fill="#e8b050" stroke="#e8b050" stroke-width="0.35" />
<polygon points="491.1,160.7 495.8,164.1 492.9,165.9 488.2,162.5" fill="#b8b8b0" stroke="#b8b8b0" stroke-width="0.35" />
<polygon points="491.1,159.4 495.8,162.8 492.9,164.6 488.2,161.2" fill="#ececec" stroke="#ececec" stroke-width="0.35" />
<polygon points="491.9,160.0 494.5,161.9 491.6,163.6 489.0,161.7" fill="#151515" stroke="#151515" stroke-width="0.35" />
<polygon points="500.2,160.9 502.3,162.4 499.4,164.2 497.3,162.7" fill="#e8b050" stroke="#e8b050" stroke-width="0.35" />
<polygon points="496.5,158.9 501.2,162.3 498.3,164.1 493.7,160.7" fill="#b8b8b0" stroke="#b8b8b0" stroke-width="0.35" />
<polygon points="496.5,157.6 501.2,161.0 498.3,162.8 493.7,159.4" fill="#ececec" stroke="#ececec" stroke-width="0.35" />
<polygon points="497.3,158.2 499.9,160.1 497.0,161.8 494.4,159.9" fill="#151515" stroke="#151515" stroke-width="0.35" />
<path d="M491.7 167.5 L502.5 163.9" stroke="#e4efe4" stroke-opacity="0.75" stroke-width="1" stroke-dasharray="1.2 0.8 0.6 0.8" fill="none"/>
<path d="M493.3 168.7 L504.1 165.1" stroke="#e4efe4" stroke-opacity="0.55" stroke-width="1" stroke-dasharray="1.2 0.8 0.6 0.8" fill="none"/>
<polygon points="490.5,170.2 507.2,164.2 514.0,169.2 497.3,175.1" fill="none" stroke="#cfe6cf" stroke-opacity="0.55" stroke-width="0.6"/>
<polygon points="499.4,172.1 501.6,173.7 498.7,175.4 496.6,173.9" fill="#e8b050" stroke="#e8b050" stroke-width="0.35" />
<polygon points="495.8,170.2 500.4,173.5 497.5,175.3 492.9,171.9" fill="#b8b8b0" stroke="#b8b8b0" stroke-width="0.35" />
<polygon points="495.8,168.9 500.4,172.2 497.5,174.0 492.9,170.6" fill="#ececec" stroke="#ececec" stroke-width="0.35" />
<polygon points="496.5,169.4 499.1,171.3 496.2,173.0 493.6,171.2" fill="#151515" stroke="#151515" stroke-width="0.35" />
<polygon points="504.8,170.2 506.9,171.7 504.0,173.5 501.9,172.0" fill="#e8b050" stroke="#e8b050" stroke-width="0.35" />
<polygon points="501.1,168.2 505.8,171.6 502.9,173.4 498.2,170.0" fill="#b8b8b0" stroke="#b8b8b0" stroke-width="0.35" />
<polygon points="501.1,166.9 505.8,170.3 502.9,172.1 498.2,168.7" fill="#ececec" stroke="#ececec" stroke-width="0.35" />
<polygon points="501.9,167.5 504.5,169.4 501.6,171.1 499.0,169.2" fill="#151515" stroke="#151515" stroke-width="0.35" />
<polygon points="510.2,168.3 512.3,169.8 509.4,171.6 507.3,170.1" fill="#e8b050" stroke="#e8b050" stroke-width="0.35" />
<polygon points="506.5,166.3 511.1,169.7 508.2,171.4 503.6,168.1" fill="#b8b8b0" stroke="#b8b8b0" stroke-width="0.35" />
<polygon points="506.5,165.0 511.1,168.4 508.2,170.1 503.6,166.8" fill="#ececec" stroke="#ececec" stroke-width="0.35" />
<polygon points="507.2,165.6 509.8,167.4 506.9,169.2 504.4,167.3" fill="#151515" stroke="#151515" stroke-width="0.35" />
<path d="M501.7 175.1 L512.5 171.3" stroke="#e4efe4" stroke-opacity="0.75" stroke-width="1" stroke-dasharray="1.2 0.8 0.6 0.8" fill="none"/>
<path d="M503.4 176.3 L514.1 172.5" stroke="#e4efe4" stroke-opacity="0.55" stroke-width="1" stroke-dasharray="1.2 0.8 0.6 0.8" fill="none"/>
<polygon points="417.2,173.4 438.8,164.3 445.6,169.3 424.0,178.3" fill="none" stroke="#cfe6cf" stroke-opacity="0.55" stroke-width="0.6"/>
<polygon points="426.1,175.2 428.2,176.7 425.3,178.5 423.2,176.9" fill="#e8b050" stroke="#e8b050" stroke-width="0.35" />
<polygon points="422.4,173.2 427.0,176.6 424.1,178.3 419.5,175.0" fill="#b8b8b0" stroke="#b8b8b0" stroke-width="0.35" />
<polygon points="422.4,171.9 427.0,175.3 424.1,177.0 419.5,173.7" fill="#ececec" stroke="#ececec" stroke-width="0.35" />
<polygon points="423.1,172.4 425.7,174.3 422.8,176.1 420.3,174.2" fill="#151515" stroke="#151515" stroke-width="0.35" />
<polygon points="431.3,173.0 433.4,174.5 430.6,176.3 428.4,174.7" fill="#e8b050" stroke="#e8b050" stroke-width="0.35" />
<polygon points="427.7,171.0 432.3,174.4 429.4,176.1 424.8,172.8" fill="#b8b8b0" stroke="#b8b8b0" stroke-width="0.35" />
<polygon points="427.7,169.7 432.3,173.1 429.4,174.8 424.8,171.5" fill="#ececec" stroke="#ececec" stroke-width="0.35" />
<polygon points="428.4,170.2 431.0,172.1 428.1,173.9 425.5,172.0" fill="#151515" stroke="#151515" stroke-width="0.35" />
<polygon points="436.6,170.8 438.7,172.3 435.8,174.1 433.7,172.5" fill="#e8b050" stroke="#e8b050" stroke-width="0.35" />
<polygon points="432.9,168.8 437.5,172.1 434.6,173.9 430.0,170.5" fill="#b8b8b0" stroke="#b8b8b0" stroke-width="0.35" />
<polygon points="432.9,167.5 437.5,170.8 434.6,172.6 430.0,169.2" fill="#ececec" stroke="#ececec" stroke-width="0.35" />
<polygon points="433.7,168.0 436.2,169.9 433.3,171.7 430.8,169.8" fill="#151515" stroke="#151515" stroke-width="0.35" />
<polygon points="441.8,168.5 444.0,170.1 441.1,171.9 439.0,170.3" fill="#e8b050" stroke="#e8b050" stroke-width="0.35" />
<polygon points="438.2,166.6 442.8,169.9 439.9,171.7 435.3,168.3" fill="#b8b8b0" stroke="#b8b8b0" stroke-width="0.35" />
<polygon points="438.2,165.3 442.8,168.6 439.9,170.4 435.3,167.0" fill="#ececec" stroke="#ececec" stroke-width="0.35" />
<polygon points="438.9,165.8 441.5,167.7 438.6,169.5 436.0,167.6" fill="#151515" stroke="#151515" stroke-width="0.35" />
<path d="M428.4 178.2 L444.1 171.6" stroke="#e4efe4" stroke-opacity="0.75" stroke-width="1" stroke-dasharray="1.2 0.8 0.6 0.8" fill="none"/>
<path d="M430.0 179.4 L445.8 172.7" stroke="#e4efe4" stroke-opacity="0.55" stroke-width="1" stroke-dasharray="1.2 0.8 0.6 0.8" fill="none"/>
<polygon points="450.8,168.3 461.9,163.6 468.7,168.6 457.6,173.2" fill="none" stroke="#cfe6cf" stroke-opacity="0.55" stroke-width="0.6"/>
<polygon points="459.7,170.1 461.8,171.6 458.9,173.4 456.8,171.8" fill="#e8b050" stroke="#e8b050" stroke-width="0.35" />
<polygon points="456.0,168.1 460.6,171.4 457.7,173.2 453.1,169.8" fill="#b8b8b0" stroke="#b8b8b0" stroke-width="0.35" />
<polygon points="456.0,166.8 460.6,170.1 457.7,171.9 453.1,168.5" fill="#ececec" stroke="#ececec" stroke-width="0.35" />
<polygon points="456.7,167.3 459.3,169.2 456.4,171.0 453.9,169.1" fill="#151515" stroke="#151515" stroke-width="0.35" />
<polygon points="464.9,167.9 467.1,169.4 464.2,171.2 462.1,169.6" fill="#e8b050" stroke="#e8b050" stroke-width="0.35" />
<polygon points="461.3,165.9 465.9,169.3 463.0,171.0 458.4,167.7" fill="#b8b8b0" stroke="#b8b8b0" stroke-width="0.35" />
<polygon points="461.3,164.6 465.9,168.0 463.0,169.7 458.4,166.4" fill="#ececec" stroke="#ececec" stroke-width="0.35" />
<polygon points="462.0,165.1 464.6,167.0 461.7,168.8 459.1,166.9" fill="#151515" stroke="#151515" stroke-width="0.35" />
<path d="M462.0 173.1 L467.2 170.9" stroke="#e4efe4" stroke-opacity="0.75" stroke-width="1" stroke-dasharray="1.2 0.8 0.6 0.8" fill="none"/>
<path d="M463.6 174.2 L468.9 172.1" stroke="#e4efe4" stroke-opacity="0.55" stroke-width="1" stroke-dasharray="1.2 0.8 0.6 0.8" fill="none"/>
<polygon points="431.1,182.1 451.6,173.9 458.4,178.8 437.9,187.0" fill="none" stroke="#cfe6cf" stroke-opacity="0.55" stroke-width="0.6"/>
<polygon points="439.8,184.0 441.9,185.5 439.0,187.3 436.9,185.8" fill="#e8b050" stroke="#e8b050" stroke-width="0.35" />
<polygon points="436.1,182.0 440.8,185.4 437.9,187.2 433.2,183.8" fill="#b8b8b0" stroke="#b8b8b0" stroke-width="0.35" />
<polygon points="436.1,180.7 440.8,184.1 437.9,185.9 433.2,182.5" fill="#ececec" stroke="#ececec" stroke-width="0.35" />
<polygon points="436.9,181.3 439.5,183.2 436.6,184.9 434.0,183.0" fill="#151515" stroke="#151515" stroke-width="0.35" />
<polygon points="444.8,182.0 446.9,183.5 444.0,185.3 441.9,183.8" fill="#e8b050" stroke="#e8b050" stroke-width="0.35" />
<polygon points="441.1,180.0 445.8,183.4 442.9,185.2 438.2,181.8" fill="#b8b8b0" stroke="#b8b8b0" stroke-width="0.35" />
<polygon points="441.1,178.7 445.8,182.1 442.9,183.9 438.2,180.5" fill="#ececec" stroke="#ececec" stroke-width="0.35" />
<polygon points="441.9,179.3 444.5,181.2 441.6,182.9 439.0,181.0" fill="#151515" stroke="#151515" stroke-width="0.35" />
<polygon points="449.8,180.0 451.9,181.5 449.0,183.3 446.9,181.8" fill="#e8b050" stroke="#e8b050" stroke-width="0.35" />
<polygon points="446.1,178.0 450.8,181.4 447.9,183.2 443.2,179.8" fill="#b8b8b0" stroke="#b8b8b0" stroke-width="0.35" />
<polygon points="446.1,176.7 450.8,180.1 447.9,181.9 443.2,178.5" fill="#ececec" stroke="#ececec" stroke-width="0.35" />
<polygon points="446.9,177.3 449.5,179.2 446.6,180.9 444.0,179.0" fill="#151515" stroke="#151515" stroke-width="0.35" />
<polygon points="454.8,178.0 456.9,179.5 454.0,181.3 451.9,179.8" fill="#e8b050" stroke="#e8b050" stroke-width="0.35" />
<polygon points="451.1,176.0 455.8,179.4 452.9,181.2 448.2,177.8" fill="#b8b8b0" stroke="#b8b8b0" stroke-width="0.35" />
<polygon points="451.1,174.7 455.8,178.1 452.9,179.9 448.2,176.5" fill="#ececec" stroke="#ececec" stroke-width="0.35" />
<polygon points="451.9,175.3 454.5,177.2 451.6,178.9 449.0,177.0" fill="#151515" stroke="#151515" stroke-width="0.35" />
<path d="M442.1 187.0 L457.1 181.0" stroke="#e4efe4" stroke-opacity="0.75" stroke-width="1" stroke-dasharray="1.2 0.8 0.6 0.8" fill="none"/>
<path d="M443.7 188.2 L458.7 182.2" stroke="#e4efe4" stroke-opacity="0.55" stroke-width="1" stroke-dasharray="1.2 0.8 0.6 0.8" fill="none"/>
<polygon points="453.2,193.6 486.1,172.0 492.9,177.0 460.0,198.5" fill="none" stroke="#cfe6cf" stroke-opacity="0.55" stroke-width="0.6"/>
<polygon points="461.7,194.9 463.8,196.4 460.9,198.2 458.8,196.7" fill="#e8b050" stroke="#e8b050" stroke-width="0.35" />
<polygon points="458.0,192.9 462.7,196.3 459.8,198.1 455.1,194.7" fill="#b8b8b0" stroke="#b8b8b0" stroke-width="0.35" />
<polygon points="458.0,191.6 462.7,195.0 459.8,196.8 455.1,193.4" fill="#ececec" stroke="#ececec" stroke-width="0.35" />
<polygon points="458.8,192.2 461.4,194.1 458.5,195.8 455.9,193.9" fill="#151515" stroke="#151515" stroke-width="0.35" />
<polygon points="466.3,191.9 468.5,193.4 465.6,195.2 463.5,193.6" fill="#e8b050" stroke="#e8b050" stroke-width="0.35" />
<polygon points="462.7,189.9 467.3,193.3 464.4,195.0 459.8,191.7" fill="#b8b8b0" stroke="#b8b8b0" stroke-width="0.35" />
<polygon points="462.7,188.6 467.3,192.0 464.4,193.7 459.8,190.4" fill="#ececec" stroke="#ececec" stroke-width="0.35" />
<polygon points="463.4,189.1 466.0,191.0 463.1,192.8 460.5,190.9" fill="#151515" stroke="#151515" stroke-width="0.35" />
<polygon points="471.0,188.8 473.1,190.4 470.2,192.1 468.1,190.6" fill="#e8b050" stroke="#e8b050" stroke-width="0.35" />
<polygon points="467.3,186.9 471.9,190.2 469.0,192.0 464.4,188.6" fill="#b8b8b0" stroke="#b8b8b0" stroke-width="0.35" />
<polygon points="467.3,185.6 471.9,188.9 469.0,190.7 464.4,187.3" fill="#ececec" stroke="#ececec" stroke-width="0.35" />
<polygon points="468.0,186.1 470.6,188.0 467.7,189.8 465.2,187.9" fill="#e8781a" stroke="#e8781a" stroke-width="0.35" />
<polygon points="475.6,185.8 477.7,187.3 474.8,189.1 472.7,187.6" fill="#e8b050" stroke="#e8b050" stroke-width="0.35" />
<polygon points="471.9,183.8 476.6,187.2 473.7,189.0 469.0,185.6" fill="#b8b8b0" stroke="#b8b8b0" stroke-width="0.35" />
<polygon points="471.9,182.5 476.6,185.9 473.7,187.7 469.0,184.3" fill="#ececec" stroke="#ececec" stroke-width="0.35" />
<polygon points="472.7,183.1 475.3,185.0 472.4,186.7 469.8,184.8" fill="#151515" stroke="#151515" stroke-width="0.35" />
<polygon points="480.2,182.8 482.4,184.3 479.5,186.1 477.4,184.5" fill="#e8b050" stroke="#e8b050" stroke-width="0.35" />
<polygon points="476.6,180.8 481.2,184.2 478.3,185.9 473.7,182.6" fill="#b8b8b0" stroke="#b8b8b0" stroke-width="0.35" />
<polygon points="476.6,179.5 481.2,182.9 478.3,184.6 473.7,181.3" fill="#ececec" stroke="#ececec" stroke-width="0.35" />
<polygon points="477.3,180.0 479.9,181.9 477.0,183.7 474.4,181.8" fill="#151515" stroke="#151515" stroke-width="0.35" />
<polygon points="484.9,179.7 487.0,181.3 484.1,183.0 482.0,181.5" fill="#e8b050" stroke="#e8b050" stroke-width="0.35" />
<polygon points="481.2,177.8 485.8,181.1 482.9,182.9 478.3,179.5" fill="#b8b8b0" stroke="#b8b8b0" stroke-width="0.35" />
<polygon points="481.2,176.5 485.8,179.8 482.9,181.6 478.3,178.2" fill="#ececec" stroke="#ececec" stroke-width="0.35" />
<polygon points="481.9,177.0 484.5,178.9 481.6,180.7 479.1,178.8" fill="#151515" stroke="#151515" stroke-width="0.35" />
<polygon points="489.5,176.7 491.6,178.2 488.7,180.0 486.6,178.5" fill="#e8b050" stroke="#e8b050" stroke-width="0.35" />
<polygon points="485.8,174.7 490.5,178.1 487.6,179.9 482.9,176.5" fill="#b8b8b0" stroke="#b8b8b0" stroke-width="0.35" />
<polygon points="485.8,173.4 490.5,176.8 487.6,178.6 482.9,175.2" fill="#ececec" stroke="#ececec" stroke-width="0.35" />
<polygon points="486.6,174.0 489.2,175.9 486.3,177.6 483.7,175.7" fill="#151515" stroke="#151515" stroke-width="0.35" />
<path d="M464.0 197.9 L491.8 179.7" stroke="#e4efe4" stroke-opacity="0.75" stroke-width="1" stroke-dasharray="1.2 0.8 0.6 0.8" fill="none"/>
<path d="M465.6 199.1 L493.4 180.9" stroke="#e4efe4" stroke-opacity="0.55" stroke-width="1" stroke-dasharray="1.2 0.8 0.6 0.8" fill="none"/>
<polygon points="477.7,192.7 488.4,198.1 481.3,202.4 470.6,197.0" fill="none" stroke="#cfe6cf" stroke-opacity="0.55" stroke-width="0.6"/>
<polygon points="474.4,196.6 477.1,198.6 474.9,199.9 472.2,197.9" fill="#e8b050" stroke="#e8b050" stroke-width="0.35" />
<polygon points="478.3,194.9 481.0,196.9 476.2,199.9 473.4,197.9" fill="#b8b8b0" stroke="#b8b8b0" stroke-width="0.35" />
<polygon points="478.3,193.6 481.0,195.6 476.2,198.6 473.4,196.6" fill="#ececec" stroke="#ececec" stroke-width="0.35" />
<polygon points="477.5,194.1 480.2,196.1 477.5,197.8 474.8,195.8" fill="#151515" stroke="#151515" stroke-width="0.35" />
<polygon points="479.5,199.2 482.2,201.2 480.0,202.5 477.3,200.5" fill="#e8b050" stroke="#e8b050" stroke-width="0.35" />
<polygon points="483.3,197.5 486.1,199.5 481.2,202.5 478.5,200.5" fill="#b8b8b0" stroke="#b8b8b0" stroke-width="0.35" />
<polygon points="483.3,196.2 486.1,198.2 481.2,201.2 478.5,199.2" fill="#ececec" stroke="#ececec" stroke-width="0.35" />
<polygon points="482.6,196.7 485.3,198.7 482.6,200.3 479.8,198.3" fill="#151515" stroke="#151515" stroke-width="0.35" />
<path d="M471.9 199.4 L476.9 202.0" stroke="#e4efe4" stroke-opacity="0.75" stroke-width="1" stroke-dasharray="1.2 0.8 0.6 0.8" fill="none"/>
<path d="M470.2 200.4 L475.2 203.0" stroke="#e4efe4" stroke-opacity="0.55" stroke-width="1" stroke-dasharray="1.2 0.8 0.6 0.8" fill="none"/>
<polygon points="465.1,201.9 468.2,199.9 475.0,204.9 471.8,206.8" fill="none" stroke="#cfe6cf" stroke-opacity="0.55" stroke-width="0.6"/>
<polygon points="472.6,203.9 474.7,205.4 471.8,207.2 469.7,205.7" fill="#e8b050" stroke="#e8b050" stroke-width="0.35" />
<polygon points="468.9,201.9 473.6,205.3 470.7,207.1 466.0,203.7" fill="#b8b8b0" stroke="#b8b8b0" stroke-width="0.35" />
<polygon points="468.9,200.6 473.6,204.0 470.7,205.8 466.0,202.4" fill="#ececec" stroke="#ececec" stroke-width="0.35" />
<polygon points="469.7,201.2 472.3,203.1 469.4,204.8 466.8,202.9" fill="#151515" stroke="#151515" stroke-width="0.35" />
<polygon points="432.3,181.4 435.4,179.4 442.2,184.4 439.0,186.3" fill="none" stroke="#cfe6cf" stroke-opacity="0.55" stroke-width="0.6"/>
<polygon points="439.8,183.4 441.9,184.9 439.0,186.7 436.9,185.2" fill="#e8b050" stroke="#e8b050" stroke-width="0.35" />
<polygon points="436.1,181.4 440.8,184.8 437.9,186.6 433.2,183.2" fill="#b8b8b0" stroke="#b8b8b0" stroke-width="0.35" />
<polygon points="436.1,180.1 440.8,183.5 437.9,185.3 433.2,181.9" fill="#ececec" stroke="#ececec" stroke-width="0.35" />
<polygon points="436.9,180.7 439.5,182.6 436.6,184.3 434.0,182.4" fill="#151515" stroke="#151515" stroke-width="0.35" />
<polygon points="479.8,213.7 514.6,193.9 521.4,198.8 486.6,218.7" fill="none" stroke="#cfe6cf" stroke-opacity="0.55" stroke-width="0.6"/>
<polygon points="488.5,215.2 490.6,216.7 487.7,218.5 485.6,217.0" fill="#e8b050" stroke="#e8b050" stroke-width="0.35" />
<polygon points="484.8,213.2 489.5,216.6 486.6,218.4 481.9,215.0" fill="#b8b8b0" stroke="#b8b8b0" stroke-width="0.35" />
<polygon points="484.8,211.9 489.5,215.3 486.6,217.1 481.9,213.7" fill="#ececec" stroke="#ececec" stroke-width="0.35" />
<polygon points="485.6,212.5 488.2,214.4 485.3,216.1 482.7,214.2" fill="#151515" stroke="#151515" stroke-width="0.35" />
<polygon points="493.4,212.4 495.5,213.9 492.6,215.7 490.5,214.2" fill="#e8b050" stroke="#e8b050" stroke-width="0.35" />
<polygon points="489.7,210.4 494.4,213.8 491.5,215.6 486.8,212.2" fill="#b8b8b0" stroke="#b8b8b0" stroke-width="0.35" />
<polygon points="489.7,209.1 494.4,212.5 491.5,214.3 486.8,210.9" fill="#ececec" stroke="#ececec" stroke-width="0.35" />
<polygon points="490.5,209.7 493.1,211.6 490.2,213.3 487.6,211.4" fill="#151515" stroke="#151515" stroke-width="0.35" />
<polygon points="498.3,209.6 500.4,211.1 497.5,212.9 495.4,211.4" fill="#e8b050" stroke="#e8b050" stroke-width="0.35" />
<polygon points="494.6,207.6 499.3,211.0 496.4,212.8 491.7,209.4" fill="#b8b8b0" stroke="#b8b8b0" stroke-width="0.35" />
<polygon points="494.6,206.3 499.3,209.7 496.4,211.5 491.7,208.1" fill="#ececec" stroke="#ececec" stroke-width="0.35" />
<polygon points="495.4,206.9 498.0,208.8 495.1,210.5 492.5,208.6" fill="#151515" stroke="#151515" stroke-width="0.35" />
<polygon points="503.2,206.8 505.3,208.3 502.4,210.1 500.3,208.6" fill="#e8b050" stroke="#e8b050" stroke-width="0.35" />
<polygon points="499.5,204.8 504.2,208.2 501.3,210.0 496.6,206.6" fill="#b8b8b0" stroke="#b8b8b0" stroke-width="0.35" />
<polygon points="499.5,203.5 504.2,206.9 501.3,208.7 496.6,205.3" fill="#ececec" stroke="#ececec" stroke-width="0.35" />
<polygon points="500.3,204.1 502.9,206.0 500.0,207.7 497.4,205.8" fill="#151515" stroke="#151515" stroke-width="0.35" />
<polygon points="508.1,204.0 510.2,205.5 507.3,207.3 505.2,205.8" fill="#e8b050" stroke="#e8b050" stroke-width="0.35" />
<polygon points="504.4,202.0 509.1,205.4 506.2,207.2 501.5,203.8" fill="#b8b8b0" stroke="#b8b8b0" stroke-width="0.35" />
<polygon points="504.4,200.7 509.1,204.1 506.2,205.9 501.5,202.5" fill="#ececec" stroke="#ececec" stroke-width="0.35" />
<polygon points="505.2,201.3 507.8,203.2 504.9,204.9 502.3,203.0" fill="#151515" stroke="#151515" stroke-width="0.35" />
<polygon points="513.0,201.2 515.1,202.7 512.2,204.5 510.1,203.0" fill="#e8b050" stroke="#e8b050" stroke-width="0.35" />
<polygon points="509.3,199.2 514.0,202.6 511.1,204.4 506.4,201.0" fill="#b8b8b0" stroke="#b8b8b0" stroke-width="0.35" />
<polygon points="509.3,197.9 514.0,201.3 511.1,203.1 506.4,199.7" fill="#ececec" stroke="#ececec" stroke-width="0.35" />
<polygon points="510.1,198.5 512.7,200.4 509.8,202.1 507.2,200.2" fill="#151515" stroke="#151515" stroke-width="0.35" />
<polygon points="517.9,198.4 520.0,199.9 517.1,201.7 515.0,200.2" fill="#e8b050" stroke="#e8b050" stroke-width="0.35" />
<polygon points="514.2,196.4 518.9,199.8 516.0,201.6 511.3,198.2" fill="#b8b8b0" stroke="#b8b8b0" stroke-width="0.35" />
<polygon points="514.2,195.1 518.9,198.5 516.0,200.3 511.3,196.9" fill="#ececec" stroke="#ececec" stroke-width="0.35" />
<polygon points="515.0,195.7 517.6,197.6 514.7,199.3 512.1,197.4" fill="#151515" stroke="#151515" stroke-width="0.35" />
<path d="M490.8 218.2 L520.2 201.4" stroke="#e4efe4" stroke-opacity="0.75" stroke-width="1" stroke-dasharray="1.2 0.8 0.6 0.8" fill="none"/>
<path d="M492.4 219.4 L521.8 202.6" stroke="#e4efe4" stroke-opacity="0.55" stroke-width="1" stroke-dasharray="1.2 0.8 0.6 0.8" fill="none"/>
<polygon points="470.8,223.4 473.8,225.6 466.7,229.9 463.7,227.7" fill="none" stroke="#cfe6cf" stroke-opacity="0.55" stroke-width="0.6"/>
<polygon points="466.2,227.0 468.9,229.0 466.7,230.3 464.0,228.3" fill="#e8b050" stroke="#e8b050" stroke-width="0.35" />
<polygon points="470.0,225.3 472.8,227.3 468.0,230.3 465.2,228.3" fill="#b8b8b0" stroke="#b8b8b0" stroke-width="0.35" />
<polygon points="470.0,224.0 472.8,226.0 468.0,229.0 465.2,227.0" fill="#ececec" stroke="#ececec" stroke-width="0.35" />
<polygon points="469.3,224.5 472.0,226.5 469.3,228.2 466.6,226.1" fill="#151515" stroke="#151515" stroke-width="0.35" />
<polygon points="465.3,230.9 468.3,233.1 461.2,237.4 458.2,235.2" fill="none" stroke="#cfe6cf" stroke-opacity="0.55" stroke-width="0.6"/>
<polygon points="460.7,234.5 463.4,236.5 461.2,237.8 458.5,235.8" fill="#e8b050" stroke="#e8b050" stroke-width="0.35" />
<polygon points="464.5,232.8 467.3,234.8 462.5,237.8 459.7,235.8" fill="#b8b8b0" stroke="#b8b8b0" stroke-width="0.35" />
<polygon points="464.5,231.5 467.3,233.5 462.5,236.5 459.7,234.5" fill="#ececec" stroke="#ececec" stroke-width="0.35" />
<polygon points="463.8,232.0 466.5,234.0 463.8,235.7 461.1,233.6" fill="#151515" stroke="#151515" stroke-width="0.35" />
<polygon points="450.2,248.6 453.2,250.8 446.1,255.1 443.1,252.9" fill="none" stroke="#cfe6cf" stroke-opacity="0.55" stroke-width="0.6"/>
<polygon points="445.6,252.2 448.3,254.2 446.1,255.5 443.4,253.5" fill="#e8b050" stroke="#e8b050" stroke-width="0.35" />
<polygon points="449.4,250.5 452.2,252.5 447.4,255.5 444.6,253.5" fill="#b8b8b0" stroke="#b8b8b0" stroke-width="0.35" />
<polygon points="449.4,249.2 452.2,251.2 447.4,254.2 444.6,252.2" fill="#ececec" stroke="#ececec" stroke-width="0.35" />
<polygon points="448.7,249.7 451.4,251.7 448.7,253.4 446.0,251.3" fill="#151515" stroke="#151515" stroke-width="0.35" />
<polygon points="462.1,257.2 465.1,259.4 458.0,263.7 455.0,261.5" fill="none" stroke="#cfe6cf" stroke-opacity="0.55" stroke-width="0.6"/>
<polygon points="457.5,260.8 460.2,262.8 458.0,264.1 455.3,262.1" fill="#e8b050" stroke="#e8b050" stroke-width="0.35" />
<polygon points="461.3,259.1 464.1,261.1 459.3,264.1 456.5,262.1" fill="#b8b8b0" stroke="#b8b8b0" stroke-width="0.35" />
<polygon points="461.3,257.8 464.1,259.8 459.3,262.8 456.5,260.8" fill="#ececec" stroke="#ececec" stroke-width="0.35" />
<polygon points="460.6,258.3 463.3,260.3 460.6,262.0 457.9,259.9" fill="#e8781a" stroke="#e8781a" stroke-width="0.35" />
<polygon points="416.5,264.3 431.0,255.2 437.8,260.1 423.2,269.3" fill="none" stroke="#cfe6cf" stroke-opacity="0.55" stroke-width="0.6"/>
<polygon points="425.0,265.7 427.1,267.2 424.2,269.0 422.1,267.5" fill="#e8b050" stroke="#e8b050" stroke-width="0.35" />
<polygon points="421.3,263.7 426.0,267.1 423.1,268.9 418.4,265.5" fill="#b8b8b0" stroke="#b8b8b0" stroke-width="0.35" />
<polygon points="421.3,262.4 426.0,265.8 423.1,267.6 418.4,264.2" fill="#ececec" stroke="#ececec" stroke-width="0.35" />
<polygon points="422.1,263.0 424.7,264.9 421.8,266.6 419.2,264.7" fill="#151515" stroke="#151515" stroke-width="0.35" />
<polygon points="429.7,262.8 431.8,264.3 428.9,266.1 426.8,264.5" fill="#e8b050" stroke="#e8b050" stroke-width="0.35" />
<polygon points="426.0,260.8 430.7,264.1 427.8,265.9 423.1,262.6" fill="#b8b8b0" stroke="#b8b8b0" stroke-width="0.35" />
<polygon points="426.0,259.5 430.7,262.8 427.8,264.6 423.1,261.3" fill="#ececec" stroke="#ececec" stroke-width="0.35" />
<polygon points="426.8,260.0 429.4,261.9 426.5,263.7 423.9,261.8" fill="#151515" stroke="#151515" stroke-width="0.35" />
<polygon points="434.4,259.8 436.5,261.3 433.6,263.1 431.5,261.6" fill="#e8b050" stroke="#e8b050" stroke-width="0.35" />
<polygon points="430.7,257.8 435.4,261.2 432.5,263.0 427.8,259.6" fill="#b8b8b0" stroke="#b8b8b0" stroke-width="0.35" />
<polygon points="430.7,256.5 435.4,259.9 432.5,261.7 427.8,258.3" fill="#ececec" stroke="#ececec" stroke-width="0.35" />
<polygon points="431.5,257.1 434.1,259.0 431.2,260.7 428.6,258.8" fill="#151515" stroke="#151515" stroke-width="0.35" />
<path d="M427.3 268.7 L436.7 262.8" stroke="#e4efe4" stroke-opacity="0.75" stroke-width="1" stroke-dasharray="1.2 0.8 0.6 0.8" fill="none"/>
<path d="M428.9 269.9 L438.3 264.0" stroke="#e4efe4" stroke-opacity="0.55" stroke-width="1" stroke-dasharray="1.2 0.8 0.6 0.8" fill="none"/>
<polygon points="427.5,276.6 447.5,264.6 454.3,269.5 434.3,281.5" fill="none" stroke="#cfe6cf" stroke-opacity="0.55" stroke-width="0.6"/>
<polygon points="436.1,278.0 438.2,279.5 435.3,281.3 433.2,279.8" fill="#e8b050" stroke="#e8b050" stroke-width="0.35" />
<polygon points="432.5,276.0 437.1,279.4 434.2,281.2 429.6,277.8" fill="#b8b8b0" stroke="#b8b8b0" stroke-width="0.35" />
<polygon points="432.5,274.7 437.1,278.1 434.2,279.9 429.6,276.5" fill="#ececec" stroke="#ececec" stroke-width="0.35" />
<polygon points="433.2,275.3 435.8,277.1 432.9,278.9 430.3,277.0" fill="#151515" stroke="#151515" stroke-width="0.35" />
<polygon points="441.0,275.1 443.1,276.6 440.2,278.4 438.1,276.8" fill="#e8b050" stroke="#e8b050" stroke-width="0.35" />
<polygon points="437.3,273.1 442.0,276.5 439.1,278.2 434.5,274.9" fill="#b8b8b0" stroke="#b8b8b0" stroke-width="0.35" />
<polygon points="437.3,271.8 442.0,275.2 439.1,276.9 434.5,273.6" fill="#ececec" stroke="#ececec" stroke-width="0.35" />
<polygon points="438.1,272.3 440.7,274.2 437.8,276.0 435.2,274.1" fill="#151515" stroke="#151515" stroke-width="0.35" />
<polygon points="445.9,272.2 448.0,273.7 445.1,275.5 443.0,273.9" fill="#e8b050" stroke="#e8b050" stroke-width="0.35" />
<polygon points="442.2,270.2 446.8,273.5 444.0,275.3 439.3,271.9" fill="#b8b8b0" stroke="#b8b8b0" stroke-width="0.35" />
<polygon points="442.2,268.9 446.8,272.2 444.0,274.0 439.3,270.6" fill="#ececec" stroke="#ececec" stroke-width="0.35" />
<polygon points="443.0,269.4 445.6,271.3 442.7,273.1 440.1,271.2" fill="#151515" stroke="#151515" stroke-width="0.35" />
<polygon points="450.8,269.2 452.9,270.8 450.0,272.5 447.9,271.0" fill="#e8b050" stroke="#e8b050" stroke-width="0.35" />
<polygon points="447.1,267.2 451.7,270.6 448.8,272.4 444.2,269.0" fill="#b8b8b0" stroke="#b8b8b0" stroke-width="0.35" />
<polygon points="447.1,265.9 451.7,269.3 448.8,271.1 444.2,267.7" fill="#ececec" stroke="#ececec" stroke-width="0.35" />
<polygon points="447.9,266.5 450.4,268.4 447.6,270.1 445.0,268.2" fill="#151515" stroke="#151515" stroke-width="0.35" />
<path d="M438.4 281.0 L453.1 272.2" stroke="#e4efe4" stroke-opacity="0.75" stroke-width="1" stroke-dasharray="1.2 0.8 0.6 0.8" fill="none"/>
<path d="M440.0 282.2 L454.7 273.4" stroke="#e4efe4" stroke-opacity="0.55" stroke-width="1" stroke-dasharray="1.2 0.8 0.6 0.8" fill="none"/>
<polygon points="377.1,264.2 380.2,262.2 387.0,267.2 383.8,269.1" fill="none" stroke="#cfe6cf" stroke-opacity="0.55" stroke-width="0.6"/>
<polygon points="384.6,266.2 386.7,267.7 383.8,269.5 381.7,268.0" fill="#e8b050" stroke="#e8b050" stroke-width="0.35" />
<polygon points="380.9,264.2 385.6,267.6 382.7,269.4 378.0,266.0" fill="#b8b8b0" stroke="#b8b8b0" stroke-width="0.35" />
<polygon points="380.9,262.9 385.6,266.3 382.7,268.1 378.0,264.7" fill="#ececec" stroke="#ececec" stroke-width="0.35" />
<polygon points="381.7,263.5 384.3,265.4 381.4,267.1 378.8,265.2" fill="#e8781a" stroke="#e8781a" stroke-width="0.35" />
<polygon points="386.7,260.6 397.5,255.4 404.3,260.3 393.5,265.6" fill="none" stroke="#cfe6cf" stroke-opacity="0.55" stroke-width="0.6"/>
<polygon points="395.5,262.3 397.6,263.8 394.7,265.6 392.6,264.0" fill="#e8b050" stroke="#e8b050" stroke-width="0.35" />
<polygon points="391.8,260.3 396.4,263.6 393.5,265.4 388.9,262.0" fill="#b8b8b0" stroke="#b8b8b0" stroke-width="0.35" />
<polygon points="391.8,259.0 396.4,262.3 393.5,264.1 388.9,260.7" fill="#ececec" stroke="#ececec" stroke-width="0.35" />
<polygon points="392.6,259.5 395.1,261.4 392.3,263.2 389.7,261.3" fill="#151515" stroke="#151515" stroke-width="0.35" />
<polygon points="400.6,259.8 402.7,261.3 399.8,263.1 397.7,261.5" fill="#e8b050" stroke="#e8b050" stroke-width="0.35" />
<polygon points="397.0,257.8 401.6,261.2 398.7,262.9 394.1,259.6" fill="#b8b8b0" stroke="#b8b8b0" stroke-width="0.35" />
<polygon points="397.0,256.5 401.6,259.9 398.7,261.6 394.1,258.3" fill="#ececec" stroke="#ececec" stroke-width="0.35" />
<polygon points="397.7,257.0 400.3,258.9 397.4,260.7 394.8,258.8" fill="#151515" stroke="#151515" stroke-width="0.35" />
<path d="M397.8 265.3 L402.9 262.8" stroke="#e4efe4" stroke-opacity="0.75" stroke-width="1" stroke-dasharray="1.2 0.8 0.6 0.8" fill="none"/>
<path d="M399.4 266.4 L404.5 264.0" stroke="#e4efe4" stroke-opacity="0.55" stroke-width="1" stroke-dasharray="1.2 0.8 0.6 0.8" fill="none"/>
<polygon points="404.0,259.6 407.1,257.6 413.9,262.6 410.7,264.5" fill="none" stroke="#cfe6cf" stroke-opacity="0.55" stroke-width="0.6"/>
<polygon points="411.5,261.6 413.6,263.1 410.7,264.9 408.6,263.4" fill="#e8b050" stroke="#e8b050" stroke-width="0.35" />
<polygon points="407.8,259.6 412.5,263.0 409.6,264.8 404.9,261.4" fill="#b8b8b0" stroke="#b8b8b0" stroke-width="0.35" />
<polygon points="407.8,258.3 412.5,261.7 409.6,263.5 404.9,260.1" fill="#ececec" stroke="#ececec" stroke-width="0.35" />
<polygon points="408.6,258.9 411.2,260.8 408.3,262.5 405.7,260.6" fill="#e8781a" stroke="#e8781a" stroke-width="0.35" />
<polygon points="365.6,287.0 368.7,285.0 375.5,290.0 372.3,291.9" fill="none" stroke="#cfe6cf" stroke-opacity="0.55" stroke-width="0.6"/>
<polygon points="373.1,289.0 375.2,290.5 372.3,292.3 370.2,290.8" fill="#e8b050" stroke="#e8b050" stroke-width="0.35" />
<polygon points="369.4,287.0 374.1,290.4 371.2,292.2 366.5,288.8" fill="#b8b8b0" stroke="#b8b8b0" stroke-width="0.35" />
<polygon points="369.4,285.7 374.1,289.1 371.2,290.9 366.5,287.5" fill="#ececec" stroke="#ececec" stroke-width="0.35" />
<polygon points="370.2,286.3 372.8,288.2 369.9,289.9 367.3,288.0" fill="#e8781a" stroke="#e8781a" stroke-width="0.35" />
<polygon points="400.8,291.9 403.8,294.1 396.7,298.4 393.7,296.2" fill="none" stroke="#cfe6cf" stroke-opacity="0.55" stroke-width="0.6"/>
<polygon points="396.2,295.5 398.9,297.5 396.7,298.8 394.0,296.8" fill="#e8b050" stroke="#e8b050" stroke-width="0.35" />
<polygon points="400.0,293.8 402.8,295.8 398.0,298.8 395.2,296.8" fill="#b8b8b0" stroke="#b8b8b0" stroke-width="0.35" />
<polygon points="400.0,292.5 402.8,294.5 398.0,297.5 395.2,295.5" fill="#ececec" stroke="#ececec" stroke-width="0.35" />
<polygon points="399.3,293.0 402.0,295.0 399.3,296.7 396.6,294.6" fill="#151515" stroke="#151515" stroke-width="0.35" />
<polygon points="229.1,276.2 265.4,255.8 272.2,260.7 235.9,281.2" fill="none" stroke="#cfe6cf" stroke-opacity="0.55" stroke-width="0.6"/>
<polygon points="238.3,277.4 240.4,278.9 237.5,280.7 235.4,279.2" fill="#e8b050" stroke="#e8b050" stroke-width="0.35" />
<polygon points="234.6,275.4 239.3,278.8 236.4,280.6 231.7,277.2" fill="#b8b8b0" stroke="#b8b8b0" stroke-width="0.35" />
<polygon points="234.6,274.1 239.3,277.5 236.4,279.3 231.7,275.9" fill="#ececec" stroke="#ececec" stroke-width="0.35" />
<polygon points="235.4,274.7 238.0,276.6 235.1,278.3 232.5,276.4" fill="#e8781a" stroke="#e8781a" stroke-width="0.35" />
<polygon points="244.3,274.1 246.4,275.6 243.5,277.4 241.4,275.8" fill="#e8b050" stroke="#e8b050" stroke-width="0.35" />
<polygon points="240.6,272.1 245.2,275.4 242.3,277.2 237.7,273.8" fill="#b8b8b0" stroke="#b8b8b0" stroke-width="0.35" />
<polygon points="240.6,270.8 245.2,274.1 242.3,275.9 237.7,272.5" fill="#ececec" stroke="#ececec" stroke-width="0.35" />
<polygon points="241.3,271.3 243.9,273.2 241.0,275.0 238.4,273.1" fill="#e8781a" stroke="#e8781a" stroke-width="0.35" />
<polygon points="250.2,270.7 252.3,272.2 249.5,274.0 247.3,272.5" fill="#e8b050" stroke="#e8b050" stroke-width="0.35" />
<polygon points="246.6,268.7 251.2,272.1 248.3,273.8 243.7,270.5" fill="#b8b8b0" stroke="#b8b8b0" stroke-width="0.35" />
<polygon points="246.6,267.4 251.2,270.8 248.3,272.5 243.7,269.2" fill="#ececec" stroke="#ececec" stroke-width="0.35" />
<polygon points="247.3,268.0 249.9,269.8 247.0,271.6 244.4,269.7" fill="#151515" stroke="#151515" stroke-width="0.35" />
<polygon points="256.2,267.3 258.3,268.9 255.4,270.6 253.3,269.1" fill="#e8b050" stroke="#e8b050" stroke-width="0.35" />
<polygon points="252.5,265.4 257.1,268.7 254.2,270.5 249.6,267.1" fill="#b8b8b0" stroke="#b8b8b0" stroke-width="0.35" />
<polygon points="252.5,264.1 257.1,267.4 254.2,269.2 249.6,265.8" fill="#ececec" stroke="#ececec" stroke-width="0.35" />
<polygon points="253.3,264.6 255.8,266.5 253.0,268.2 250.4,266.4" fill="#151515" stroke="#151515" stroke-width="0.35" />
<polygon points="262.2,264.0 264.3,265.5 261.4,267.3 259.3,265.7" fill="#e8b050" stroke="#e8b050" stroke-width="0.35" />
<polygon points="258.5,262.0 263.1,265.4 260.2,267.1 255.6,263.8" fill="#b8b8b0" stroke="#b8b8b0" stroke-width="0.35" />
<polygon points="258.5,260.7 263.1,264.1 260.2,265.8 255.6,262.5" fill="#ececec" stroke="#ececec" stroke-width="0.35" />
<polygon points="259.2,261.2 261.8,263.1 258.9,264.9 256.3,263.0" fill="#e8781a" stroke="#e8781a" stroke-width="0.35" />
<polygon points="268.1,260.6 270.2,262.1 267.3,263.9 265.2,262.4" fill="#e8b050" stroke="#e8b050" stroke-width="0.35" />
<polygon points="264.4,258.6 269.1,262.0 266.2,263.8 261.5,260.4" fill="#b8b8b0" stroke="#b8b8b0" stroke-width="0.35" />
<polygon points="264.4,257.3 269.1,260.7 266.2,262.5 261.5,259.1" fill="#ececec" stroke="#ececec" stroke-width="0.35" />
<polygon points="265.2,257.9 267.8,259.8 264.9,261.5 262.3,259.6" fill="#e8781a" stroke="#e8781a" stroke-width="0.35" />
<path d="M240.6 280.4 L270.4 263.6" stroke="#e4efe4" stroke-opacity="0.75" stroke-width="1" stroke-dasharray="1.2 0.8 0.6 0.8" fill="none"/>
<path d="M242.2 281.6 L272.0 264.8" stroke="#e4efe4" stroke-opacity="0.55" stroke-width="1" stroke-dasharray="1.2 0.8 0.6 0.8" fill="none"/>
<polygon points="270.4,250.1 290.0,240.3 296.8,245.2 277.2,255.1" fill="none" stroke="#cfe6cf" stroke-opacity="0.55" stroke-width="0.6"/>
<polygon points="279.8,251.4 281.9,252.9 279.0,254.7 276.9,253.2" fill="#e8b050" stroke="#e8b050" stroke-width="0.35" />
<polygon points="276.1,249.4 280.8,252.8 277.9,254.6 273.3,251.2" fill="#b8b8b0" stroke="#b8b8b0" stroke-width="0.35" />
<polygon points="276.1,248.1 280.8,251.5 277.9,253.3 273.3,249.9" fill="#ececec" stroke="#ececec" stroke-width="0.35" />
<polygon points="276.9,248.7 279.5,250.5 276.6,252.3 274.0,250.4" fill="#e8781a" stroke="#e8781a" stroke-width="0.35" />
<polygon points="286.2,248.2 288.3,249.7 285.4,251.5 283.3,250.0" fill="#e8b050" stroke="#e8b050" stroke-width="0.35" />
<polygon points="282.5,246.2 287.1,249.6 284.2,251.4 279.6,248.0" fill="#b8b8b0" stroke="#b8b8b0" stroke-width="0.35" />
<polygon points="282.5,244.9 287.1,248.3 284.2,250.1 279.6,246.7" fill="#ececec" stroke="#ececec" stroke-width="0.35" />
<polygon points="283.2,245.5 285.8,247.4 282.9,249.1 280.3,247.2" fill="#e8781a" stroke="#e8781a" stroke-width="0.35" />
<polygon points="292.5,245.0 294.6,246.6 291.7,248.3 289.6,246.8" fill="#e8b050" stroke="#e8b050" stroke-width="0.35" />
<polygon points="288.8,243.0 293.4,246.4 290.6,248.2 285.9,244.8" fill="#b8b8b0" stroke="#b8b8b0" stroke-width="0.35" />
<polygon points="288.8,241.7 293.4,245.1 290.6,246.9 285.9,243.5" fill="#ececec" stroke="#ececec" stroke-width="0.35" />
<polygon points="289.6,242.3 292.2,244.2 289.3,245.9 286.7,244.1" fill="#e8781a" stroke="#e8781a" stroke-width="0.35" />
<path d="M282.1 254.4 L294.8 248.0" stroke="#e4efe4" stroke-opacity="0.75" stroke-width="1" stroke-dasharray="1.2 0.8 0.6 0.8" fill="none"/>
<path d="M283.7 255.6 L296.4 249.2" stroke="#e4efe4" stroke-opacity="0.55" stroke-width="1" stroke-dasharray="1.2 0.8 0.6 0.8" fill="none"/>
<polygon points="270.3,265.4 273.4,263.4 280.2,268.4 277.0,270.3" fill="none" stroke="#cfe6cf" stroke-opacity="0.55" stroke-width="0.6"/>
<polygon points="277.8,267.4 279.9,268.9 277.0,270.7 274.9,269.2" fill="#e8b050" stroke="#e8b050" stroke-width="0.35" />
<polygon points="274.1,265.4 278.8,268.8 275.9,270.6 271.2,267.2" fill="#b8b8b0" stroke="#b8b8b0" stroke-width="0.35" />
<polygon points="274.1,264.1 278.8,267.5 275.9,269.3 271.2,265.9" fill="#ececec" stroke="#ececec" stroke-width="0.35" />
<polygon points="274.9,264.7 277.5,266.6 274.6,268.3 272.0,266.4" fill="#151515" stroke="#151515" stroke-width="0.35" />
<polygon points="318.1,240.6 328.6,235.3 335.4,240.3 324.9,245.5" fill="none" stroke="#cfe6cf" stroke-opacity="0.55" stroke-width="0.6"/>
<polygon points="326.8,242.2 328.9,243.7 326.0,245.5 323.9,244.0" fill="#e8b050" stroke="#e8b050" stroke-width="0.35" />
<polygon points="323.1,240.2 327.8,243.6 324.9,245.4 320.2,242.0" fill="#b8b8b0" stroke="#b8b8b0" stroke-width="0.35" />
<polygon points="323.1,238.9 327.8,242.3 324.9,244.1 320.2,240.7" fill="#ececec" stroke="#ececec" stroke-width="0.35" />
<polygon points="323.9,239.5 326.5,241.4 323.6,243.1 321.0,241.2" fill="#151515" stroke="#151515" stroke-width="0.35" />
<polygon points="331.8,239.7 333.9,241.2 331.0,243.0 328.9,241.5" fill="#e8b050" stroke="#e8b050" stroke-width="0.35" />
<polygon points="328.1,237.7 332.8,241.1 329.9,242.9 325.2,239.5" fill="#b8b8b0" stroke="#b8b8b0" stroke-width="0.35" />
<polygon points="328.1,236.4 332.8,239.8 329.9,241.6 325.2,238.2" fill="#ececec" stroke="#ececec" stroke-width="0.35" />
<polygon points="328.9,237.0 331.5,238.9 328.6,240.6 326.0,238.7" fill="#151515" stroke="#151515" stroke-width="0.35" />
<path d="M329.1 245.2 L334.1 242.7" stroke="#e4efe4" stroke-opacity="0.75" stroke-width="1" stroke-dasharray="1.2 0.8 0.6 0.8" fill="none"/>
<path d="M330.7 246.4 L335.7 243.9" stroke="#e4efe4" stroke-opacity="0.55" stroke-width="1" stroke-dasharray="1.2 0.8 0.6 0.8" fill="none"/>
<polygon points="293.4,279.3 332.0,261.0 338.8,266.0 300.1,284.3" fill="none" stroke="#cfe6cf" stroke-opacity="0.55" stroke-width="0.6"/>
<polygon points="302.8,280.7 304.9,282.2 302.0,284.0 299.9,282.5" fill="#e8b050" stroke="#e8b050" stroke-width="0.35" />
<polygon points="299.1,278.7 303.8,282.1 300.9,283.9 296.2,280.5" fill="#b8b8b0" stroke="#b8b8b0" stroke-width="0.35" />
<polygon points="299.1,277.4 303.8,280.8 300.9,282.6 296.2,279.2" fill="#ececec" stroke="#ececec" stroke-width="0.35" />
<polygon points="299.9,278.0 302.5,279.9 299.6,281.6 297.0,279.7" fill="#e8781a" stroke="#e8781a" stroke-width="0.35" />
<polygon points="309.2,277.7 311.3,279.2 308.4,281.0 306.3,279.5" fill="#e8b050" stroke="#e8b050" stroke-width="0.35" />
<polygon points="305.5,275.7 310.1,279.1 307.2,280.9 302.6,277.5" fill="#b8b8b0" stroke="#b8b8b0" stroke-width="0.35" />
<polygon points="305.5,274.4 310.1,277.8 307.2,279.6 302.6,276.2" fill="#ececec" stroke="#ececec" stroke-width="0.35" />
<polygon points="306.2,275.0 308.8,276.9 305.9,278.6 303.3,276.7" fill="#e8781a" stroke="#e8781a" stroke-width="0.35" />
<polygon points="315.5,274.7 317.6,276.2 314.7,278.0 312.6,276.5" fill="#e8b050" stroke="#e8b050" stroke-width="0.35" />
<polygon points="311.8,272.7 316.4,276.1 313.5,277.9 308.9,274.5" fill="#b8b8b0" stroke="#b8b8b0" stroke-width="0.35" />
<polygon points="311.8,271.4 316.4,274.8 313.5,276.6 308.9,273.2" fill="#ececec" stroke="#ececec" stroke-width="0.35" />
<polygon points="312.6,272.0 315.1,273.9 312.3,275.6 309.7,273.7" fill="#e8781a" stroke="#e8781a" stroke-width="0.35" />
<polygon points="321.8,271.7 323.9,273.2 321.1,275.0 318.9,273.5" fill="#e8b050" stroke="#e8b050" stroke-width="0.35" />
<polygon points="318.2,269.7 322.8,273.1 319.9,274.9 315.3,271.5" fill="#b8b8b0" stroke="#b8b8b0" stroke-width="0.35" />
<polygon points="318.2,268.4 322.8,271.8 319.9,273.6 315.3,270.2" fill="#ececec" stroke="#ececec" stroke-width="0.35" />
<polygon points="318.9,269.0 321.5,270.9 318.6,272.6 316.0,270.7" fill="#e8781a" stroke="#e8781a" stroke-width="0.35" />
<polygon points="328.2,268.7 330.3,270.2 327.4,272.0 325.3,270.5" fill="#e8b050" stroke="#e8b050" stroke-width="0.35" />
<polygon points="324.5,266.7 329.1,270.1 326.2,271.9 321.6,268.5" fill="#b8b8b0" stroke="#b8b8b0" stroke-width="0.35" />
<polygon points="324.5,265.4 329.1,268.8 326.2,270.6 321.6,267.2" fill="#ececec" stroke="#ececec" stroke-width="0.35" />
<polygon points="325.2,266.0 327.8,267.9 324.9,269.6 322.3,267.7" fill="#e8781a" stroke="#e8781a" stroke-width="0.35" />
<polygon points="334.5,265.7 336.6,267.2 333.7,269.0 331.6,267.5" fill="#e8b050" stroke="#e8b050" stroke-width="0.35" />
<polygon points="330.8,263.7 335.5,267.1 332.6,268.9 327.9,265.5" fill="#b8b8b0" stroke="#b8b8b0" stroke-width="0.35" />
<polygon points="330.8,262.4 335.5,265.8 332.6,267.6 327.9,264.2" fill="#ececec" stroke="#ececec" stroke-width="0.35" />
<polygon points="331.6,263.0 334.2,264.9 331.3,266.6 328.7,264.7" fill="#e8781a" stroke="#e8781a" stroke-width="0.35" />
<path d="M305.1 283.7 L336.8 268.7" stroke="#e4efe4" stroke-opacity="0.75" stroke-width="1" stroke-dasharray="1.2 0.8 0.6 0.8" fill="none"/>
<path d="M306.7 284.9 L338.4 269.9" stroke="#e4efe4" stroke-opacity="0.55" stroke-width="1" stroke-dasharray="1.2 0.8 0.6 0.8" fill="none"/>
<polygon points="266.1,299.1 283.0,288.4 289.8,293.3 272.9,304.0" fill="none" stroke="#cfe6cf" stroke-opacity="0.55" stroke-width="0.6"/>
<polygon points="275.1,300.2 277.2,301.7 274.3,303.5 272.2,302.0" fill="#e8b050" stroke="#e8b050" stroke-width="0.35" />
<polygon points="271.4,298.2 276.1,301.6 273.2,303.4 268.5,300.0" fill="#b8b8b0" stroke="#b8b8b0" stroke-width="0.35" />
<polygon points="271.4,296.9 276.1,300.3 273.2,302.1 268.5,298.7" fill="#ececec" stroke="#ececec" stroke-width="0.35" />
<polygon points="272.2,297.5 274.8,299.4 271.9,301.1 269.3,299.2" fill="#e8781a" stroke="#e8781a" stroke-width="0.35" />
<polygon points="280.6,296.8 282.7,298.3 279.8,300.1 277.7,298.5" fill="#e8b050" stroke="#e8b050" stroke-width="0.35" />
<polygon points="276.9,294.8 281.5,298.1 278.6,299.9 274.0,296.6" fill="#b8b8b0" stroke="#b8b8b0" stroke-width="0.35" />
<polygon points="276.9,293.5 281.5,296.8 278.6,298.6 274.0,295.3" fill="#ececec" stroke="#ececec" stroke-width="0.35" />
<polygon points="277.6,294.0 280.2,295.9 277.3,297.7 274.7,295.8" fill="#e8781a" stroke="#e8781a" stroke-width="0.35" />
<polygon points="286.0,293.3 288.1,294.8 285.2,296.6 283.1,295.1" fill="#e8b050" stroke="#e8b050" stroke-width="0.35" />
<polygon points="282.3,291.3 287.0,294.7 284.1,296.5 279.4,293.1" fill="#b8b8b0" stroke="#b8b8b0" stroke-width="0.35" />
<polygon points="282.3,290.0 287.0,293.4 284.1,295.2 279.4,291.8" fill="#ececec" stroke="#ececec" stroke-width="0.35" />
<polygon points="283.1,290.6 285.7,292.5 282.8,294.2 280.2,292.3" fill="#e8781a" stroke="#e8781a" stroke-width="0.35" />
<path d="M277.4 303.2 L288.3 296.3" stroke="#e4efe4" stroke-opacity="0.75" stroke-width="1" stroke-dasharray="1.2 0.8 0.6 0.8" fill="none"/>
<path d="M279.0 304.4 L289.9 297.5" stroke="#e4efe4" stroke-opacity="0.55" stroke-width="1" stroke-dasharray="1.2 0.8 0.6 0.8" fill="none"/>
<polygon points="265.1,318.6 275.6,313.3 282.4,318.3 271.9,323.5" fill="none" stroke="#cfe6cf" stroke-opacity="0.55" stroke-width="0.6"/>
<polygon points="273.8,320.2 275.9,321.7 273.0,323.5 270.9,322.0" fill="#e8b050" stroke="#e8b050" stroke-width="0.35" />
<polygon points="270.1,318.2 274.8,321.6 271.9,323.4 267.2,320.0" fill="#b8b8b0" stroke="#b8b8b0" stroke-width="0.35" />
<polygon points="270.1,316.9 274.8,320.3 271.9,322.1 267.2,318.7" fill="#ececec" stroke="#ececec" stroke-width="0.35" />
<polygon points="270.9,317.5 273.5,319.4 270.6,321.1 268.0,319.2" fill="#151515" stroke="#151515" stroke-width="0.35" />
<polygon points="278.8,317.7 280.9,319.2 278.0,321.0 275.9,319.5" fill="#e8b050" stroke="#e8b050" stroke-width="0.35" />
<polygon points="275.1,315.7 279.8,319.1 276.9,320.9 272.2,317.5" fill="#b8b8b0" stroke="#b8b8b0" stroke-width="0.35" />
<polygon points="275.1,314.4 279.8,317.8 276.9,319.6 272.2,316.2" fill="#ececec" stroke="#ececec" stroke-width="0.35" />
<polygon points="275.9,315.0 278.5,316.9 275.6,318.6 273.0,316.7" fill="#151515" stroke="#151515" stroke-width="0.35" />
<path d="M276.1 323.2 L281.1 320.7" stroke="#e4efe4" stroke-opacity="0.75" stroke-width="1" stroke-dasharray="1.2 0.8 0.6 0.8" fill="none"/>
<path d="M277.7 324.4 L282.7 321.9" stroke="#e4efe4" stroke-opacity="0.55" stroke-width="1" stroke-dasharray="1.2 0.8 0.6 0.8" fill="none"/>
<polygon points="364.3,288.2 367.4,286.2 374.2,291.2 371.0,293.1" fill="none" stroke="#cfe6cf" stroke-opacity="0.55" stroke-width="0.6"/>
<polygon points="371.8,290.2 373.9,291.7 371.0,293.5 368.9,292.0" fill="#e8b050" stroke="#e8b050" stroke-width="0.35" />
<polygon points="368.1,288.2 372.8,291.6 369.9,293.4 365.2,290.0" fill="#b8b8b0" stroke="#b8b8b0" stroke-width="0.35" />
<polygon points="368.1,286.9 372.8,290.3 369.9,292.1 365.2,288.7" fill="#ececec" stroke="#ececec" stroke-width="0.35" />
<polygon points="368.9,287.5 371.5,289.4 368.6,291.1 366.0,289.2" fill="#151515" stroke="#151515" stroke-width="0.35" />
<polygon points="313.5,341.0 371.5,306.5 376.0,310.5 318.5,346.5" fill="none" stroke="#cfe6cf" stroke-opacity="0.6" stroke-width="0.6"/>
<polygon points="322.2,343.0 324.3,344.5 321.4,346.3 319.3,344.8" fill="#e8b050" stroke="#e8b050" stroke-width="0.35" />
<polygon points="318.5,341.0 323.2,344.4 320.3,346.2 315.6,342.8" fill="#b8b8b0" stroke="#b8b8b0" stroke-width="0.35" />
<polygon points="318.5,339.7 323.2,343.1 320.3,344.9 315.6,341.5" fill="#ececec" stroke="#ececec" stroke-width="0.35" />
<polygon points="319.3,340.3 321.9,342.2 319.0,343.9 316.4,342.0" fill="#e8781a" stroke="#e8781a" stroke-width="0.35" />
<polygon points="328.5,339.8 330.6,341.3 327.7,343.1 325.6,341.6" fill="#e8b050" stroke="#e8b050" stroke-width="0.35" />
<polygon points="324.8,337.8 329.5,341.2 326.6,343.0 321.9,339.6" fill="#b8b8b0" stroke="#b8b8b0" stroke-width="0.35" />
<polygon points="324.8,336.5 329.5,339.9 326.6,341.7 321.9,338.3" fill="#ececec" stroke="#ececec" stroke-width="0.35" />
<polygon points="325.6,337.1 328.2,339.0 325.3,340.7 322.7,338.8" fill="#e8781a" stroke="#e8781a" stroke-width="0.35" />
<polygon points="333.5,336.8 335.6,338.3 332.7,340.1 330.6,338.6" fill="#e8b050" stroke="#e8b050" stroke-width="0.35" />
<polygon points="329.8,334.8 334.5,338.2 331.6,340.0 326.9,336.6" fill="#b8b8b0" stroke="#b8b8b0" stroke-width="0.35" />
<polygon points="329.8,333.5 334.5,336.9 331.6,338.7 326.9,335.3" fill="#ececec" stroke="#ececec" stroke-width="0.35" />
<polygon points="330.6,334.1 333.2,336.0 330.3,337.7 327.7,335.8" fill="#e8781a" stroke="#e8781a" stroke-width="0.35" />
<polygon points="339.5,333.4 341.6,334.9 338.7,336.7 336.6,335.2" fill="#e8b050" stroke="#e8b050" stroke-width="0.35" />
<polygon points="335.8,331.4 340.5,334.8 337.6,336.6 332.9,333.2" fill="#b8b8b0" stroke="#b8b8b0" stroke-width="0.35" />
<polygon points="335.8,330.1 340.5,333.5 337.6,335.3 332.9,331.9" fill="#ececec" stroke="#ececec" stroke-width="0.35" />
<polygon points="336.6,330.7 339.2,332.6 336.3,334.3 333.7,332.4" fill="#e8781a" stroke="#e8781a" stroke-width="0.35" />
<polygon points="344.8,330.4 346.9,331.9 344.0,333.7 341.9,332.2" fill="#e8b050" stroke="#e8b050" stroke-width="0.35" />
<polygon points="341.1,328.4 345.8,331.8 342.9,333.6 338.2,330.2" fill="#b8b8b0" stroke="#b8b8b0" stroke-width="0.35" />
<polygon points="341.1,327.1 345.8,330.5 342.9,332.3 338.2,328.9" fill="#ececec" stroke="#ececec" stroke-width="0.35" />
<polygon points="341.9,327.7 344.5,329.6 341.6,331.3 339.0,329.4" fill="#151515" stroke="#151515" stroke-width="0.35" />
<polygon points="349.8,327.1 351.9,328.6 349.0,330.4 346.9,328.9" fill="#e8b050" stroke="#e8b050" stroke-width="0.35" />
<polygon points="346.1,325.1 350.8,328.5 347.9,330.3 343.2,326.9" fill="#b8b8b0" stroke="#b8b8b0" stroke-width="0.35" />
<polygon points="346.1,323.8 350.8,327.2 347.9,329.0 343.2,325.6" fill="#ececec" stroke="#ececec" stroke-width="0.35" />
<polygon points="346.9,324.4 349.5,326.3 346.6,328.0 344.0,326.1" fill="#e8781a" stroke="#e8781a" stroke-width="0.35" />
<polygon points="355.9,321.9 358.0,323.4 355.1,325.2 353.0,323.7" fill="#e8b050" stroke="#e8b050" stroke-width="0.35" />
<polygon points="352.2,319.9 356.9,323.3 354.0,325.1 349.3,321.7" fill="#b8b8b0" stroke="#b8b8b0" stroke-width="0.35" />
<polygon points="352.2,318.6 356.9,322.0 354.0,323.8 349.3,320.4" fill="#ececec" stroke="#ececec" stroke-width="0.35" />
<polygon points="353.0,319.2 355.6,321.1 352.7,322.8 350.1,320.9" fill="#e8781a" stroke="#e8781a" stroke-width="0.35" />
<polygon points="365.3,316.5 367.4,318.0 364.5,319.8 362.4,318.3" fill="#e8b050" stroke="#e8b050" stroke-width="0.35" />
<polygon points="361.6,314.5 366.3,317.9 363.4,319.7 358.7,316.3" fill="#b8b8b0" stroke="#b8b8b0" stroke-width="0.35" />
<polygon points="361.6,313.2 366.3,316.6 363.4,318.4 358.7,315.0" fill="#ececec" stroke="#ececec" stroke-width="0.35" />
<polygon points="362.4,313.8 365.0,315.7 362.1,317.4 359.5,315.5" fill="#e8781a" stroke="#e8781a" stroke-width="0.35" />
<polygon points="371.2,313.2 373.3,314.7 370.4,316.5 368.3,315.0" fill="#e8b050" stroke="#e8b050" stroke-width="0.35" />
<polygon points="367.5,311.2 372.2,314.6 369.3,316.4 364.6,313.0" fill="#b8b8b0" stroke="#b8b8b0" stroke-width="0.35" />
<polygon points="367.5,309.9 372.2,313.3 369.3,315.1 364.6,311.7" fill="#ececec" stroke="#ececec" stroke-width="0.35" />
<polygon points="368.3,310.5 370.9,312.4 368.0,314.1 365.4,312.2" fill="#e8781a" stroke="#e8781a" stroke-width="0.35" />
<path d="M324.6 345.1 l6.5 4.7" stroke="#e4efe4" stroke-opacity="0.8" stroke-width="0.9" stroke-dasharray="1.3 0.8" fill="none"/>
<path d="M323.1 346.0 l6.5 4.7" stroke="#e4efe4" stroke-opacity="0.8" stroke-width="0.9" stroke-dasharray="1.3 0.8" fill="none"/>
<path d="M330.9 341.9 l6.5 4.7" stroke="#e4efe4" stroke-opacity="0.8" stroke-width="0.9" stroke-dasharray="1.3 0.8" fill="none"/>
<path d="M329.4 342.8 l6.5 4.7" stroke="#e4efe4" stroke-opacity="0.8" stroke-width="0.9" stroke-dasharray="1.3 0.8" fill="none"/>
<path d="M335.9 338.9 l6.5 4.7" stroke="#e4efe4" stroke-opacity="0.8" stroke-width="0.9" stroke-dasharray="1.3 0.8" fill="none"/>
<path d="M334.4 339.8 l6.5 4.7" stroke="#e4efe4" stroke-opacity="0.8" stroke-width="0.9" stroke-dasharray="1.3 0.8" fill="none"/>
<path d="M341.9 335.5 l6.5 4.7" stroke="#e4efe4" stroke-opacity="0.8" stroke-width="0.9" stroke-dasharray="1.3 0.8" fill="none"/>
<path d="M340.4 336.4 l6.5 4.7" stroke="#e4efe4" stroke-opacity="0.8" stroke-width="0.9" stroke-dasharray="1.3 0.8" fill="none"/>
<path d="M347.2 332.5 l6.5 4.7" stroke="#e4efe4" stroke-opacity="0.8" stroke-width="0.9" stroke-dasharray="1.3 0.8" fill="none"/>
<path d="M345.7 333.4 l6.5 4.7" stroke="#e4efe4" stroke-opacity="0.8" stroke-width="0.9" stroke-dasharray="1.3 0.8" fill="none"/>
<path d="M352.2 329.2 l6.5 4.7" stroke="#e4efe4" stroke-opacity="0.8" stroke-width="0.9" stroke-dasharray="1.3 0.8" fill="none"/>
<path d="M350.7 330.1 l6.5 4.7" stroke="#e4efe4" stroke-opacity="0.8" stroke-width="0.9" stroke-dasharray="1.3 0.8" fill="none"/>
<path d="M358.3 324.0 l6.5 4.7" stroke="#e4efe4" stroke-opacity="0.8" stroke-width="0.9" stroke-dasharray="1.3 0.8" fill="none"/>
<path d="M356.8 324.9 l6.5 4.7" stroke="#e4efe4" stroke-opacity="0.8" stroke-width="0.9" stroke-dasharray="1.3 0.8" fill="none"/>
<path d="M367.7 318.6 l6.5 4.7" stroke="#e4efe4" stroke-opacity="0.8" stroke-width="0.9" stroke-dasharray="1.3 0.8" fill="none"/>
<path d="M366.2 319.5 l6.5 4.7" stroke="#e4efe4" stroke-opacity="0.8" stroke-width="0.9" stroke-dasharray="1.3 0.8" fill="none"/>
<path d="M373.6 315.3 l6.5 4.7" stroke="#e4efe4" stroke-opacity="0.8" stroke-width="0.9" stroke-dasharray="1.3 0.8" fill="none"/>
<path d="M372.1 316.2 l6.5 4.7" stroke="#e4efe4" stroke-opacity="0.8" stroke-width="0.9" stroke-dasharray="1.3 0.8" fill="none"/>
<path d="M257.0 161.0 l7.6 -4.7" stroke="#dfe8df" stroke-width="0.9" stroke-dasharray="1.1 0.7" fill="none"/>
<path d="M258.8 162.3 l7.6 -4.7" stroke="#dfe8df" stroke-width="0.9" stroke-dasharray="1.1 0.7" fill="none"/>
<path d="M262.0 166.0 l6.8 -4.2" stroke="#dfe8df" stroke-width="0.9" stroke-dasharray="1.1 0.7" fill="none"/>
<path d="M263.8 167.3 l6.8 -4.2" stroke="#dfe8df" stroke-width="0.9" stroke-dasharray="1.1 0.7" fill="none"/>
<path d="M239.0 172.0 l5.1 -3.1" stroke="#dfe8df" stroke-width="0.9" stroke-dasharray="1.1 0.7" fill="none"/>
<path d="M240.8 173.3 l5.1 -3.1" stroke="#dfe8df" stroke-width="0.9" stroke-dasharray="1.1 0.7" fill="none"/>
<path d="M232.0 178.5 l3.4 -2.1" stroke="#dfe8df" stroke-width="0.9" stroke-dasharray="1.1 0.7" fill="none"/>
<path d="M215.0 153.0 l4.2 -2.6" stroke="#dfe8df" stroke-width="0.9" stroke-dasharray="1.1 0.7" fill="none"/>
<path d="M216.8 154.3 l4.2 -2.6" stroke="#dfe8df" stroke-width="0.9" stroke-dasharray="1.1 0.7" fill="none"/>
<path d="M203.0 192.0 l4.2 -2.6" stroke="#dfe8df" stroke-width="0.9" stroke-dasharray="1.1 0.7" fill="none"/>
<path d="M204.8 193.3 l4.2 -2.6" stroke="#dfe8df" stroke-width="0.9" stroke-dasharray="1.1 0.7" fill="none"/>
<path d="M180.0 212.0 l10.2 -6.2" stroke="#dfe8df" stroke-width="0.9" stroke-dasharray="1.1 0.7" fill="none"/>
<path d="M181.8 213.3 l10.2 -6.2" stroke="#dfe8df" stroke-width="0.9" stroke-dasharray="1.1 0.7" fill="none"/>
<path d="M183.6 214.6 l10.2 -6.2" stroke="#dfe8df" stroke-width="0.9" stroke-dasharray="1.1 0.7" fill="none"/>
<path d="M190.0 243.0 l11.9 -7.3" stroke="#dfe8df" stroke-width="0.9" stroke-dasharray="1.1 0.7" fill="none"/>
<path d="M191.8 244.3 l11.9 -7.3" stroke="#dfe8df" stroke-width="0.9" stroke-dasharray="1.1 0.7" fill="none"/>
<path d="M193.6 245.6 l11.9 -7.3" stroke="#dfe8df" stroke-width="0.9" stroke-dasharray="1.1 0.7" fill="none"/>
<path d="M214.0 228.0 l11.9 -7.3" stroke="#dfe8df" stroke-width="0.9" stroke-dasharray="1.1 0.7" fill="none"/>
<path d="M215.8 229.3 l11.9 -7.3" stroke="#dfe8df" stroke-width="0.9" stroke-dasharray="1.1 0.7" fill="none"/>
<path d="M217.6 230.6 l11.9 -7.3" stroke="#dfe8df" stroke-width="0.9" stroke-dasharray="1.1 0.7" fill="none"/>
<path d="M205.0 215.0 l10.2 -6.2" stroke="#dfe8df" stroke-width="0.9" stroke-dasharray="1.1 0.7" fill="none"/>
<path d="M206.8 216.3 l10.2 -6.2" stroke="#dfe8df" stroke-width="0.9" stroke-dasharray="1.1 0.7" fill="none"/>
<path d="M208.6 217.6 l10.2 -6.2" stroke="#dfe8df" stroke-width="0.9" stroke-dasharray="1.1 0.7" fill="none"/>
<path d="M408.0 156.0 l8.5 -5.2" stroke="#dfe8df" stroke-width="0.9" stroke-dasharray="1.1 0.7" fill="none"/>
<path d="M409.8 157.3 l8.5 -5.2" stroke="#dfe8df" stroke-width="0.9" stroke-dasharray="1.1 0.7" fill="none"/>
<path d="M456.0 162.0 l9.3 -5.7" stroke="#dfe8df" stroke-width="0.9" stroke-dasharray="1.1 0.7" fill="none"/>
<path d="M457.8 163.3 l9.3 -5.7" stroke="#dfe8df" stroke-width="0.9" stroke-dasharray="1.1 0.7" fill="none"/>
<path d="M480.0 165.0 l5.1 -3.1" stroke="#dfe8df" stroke-width="0.9" stroke-dasharray="1.1 0.7" fill="none"/>
<path d="M426.0 180.0 l7.6 -4.7" stroke="#dfe8df" stroke-width="0.9" stroke-dasharray="1.1 0.7" fill="none"/>
<path d="M427.8 181.3 l7.6 -4.7" stroke="#dfe8df" stroke-width="0.9" stroke-dasharray="1.1 0.7" fill="none"/>
<path d="M441.0 189.0 l7.6 -4.7" stroke="#dfe8df" stroke-width="0.9" stroke-dasharray="1.1 0.7" fill="none"/>
<path d="M442.8 190.3 l7.6 -4.7" stroke="#dfe8df" stroke-width="0.9" stroke-dasharray="1.1 0.7" fill="none"/>
<path d="M468.0 194.0 l11.9 -7.3" stroke="#dfe8df" stroke-width="0.9" stroke-dasharray="1.1 0.7" fill="none"/>
<path d="M469.8 195.3 l11.9 -7.3" stroke="#dfe8df" stroke-width="0.9" stroke-dasharray="1.1 0.7" fill="none"/>
<path d="M492.0 221.0 l13.6 -8.3" stroke="#dfe8df" stroke-width="0.9" stroke-dasharray="1.1 0.7" fill="none"/>
<path d="M493.8 222.3 l13.6 -8.3" stroke="#dfe8df" stroke-width="0.9" stroke-dasharray="1.1 0.7" fill="none"/>
<path d="M495.6 223.6 l13.6 -8.3" stroke="#dfe8df" stroke-width="0.9" stroke-dasharray="1.1 0.7" fill="none"/>
<path d="M475.0 229.0 l4.1 2.9" stroke="#dfe8df" stroke-width="0.9" stroke-dasharray="1.1 0.7" fill="none"/>
<path d="M473.1 230.1 l4.1 2.9" stroke="#dfe8df" stroke-width="0.9" stroke-dasharray="1.1 0.7" fill="none"/>
<path d="M455.0 247.0 l4.1 2.9" stroke="#dfe8df" stroke-width="0.9" stroke-dasharray="1.1 0.7" fill="none"/>
<path d="M453.1 248.1 l4.1 2.9" stroke="#dfe8df" stroke-width="0.9" stroke-dasharray="1.1 0.7" fill="none"/>
<path d="M440.0 282.0 l7.6 -4.7" stroke="#dfe8df" stroke-width="0.9" stroke-dasharray="1.1 0.7" fill="none"/>
<path d="M441.8 283.3 l7.6 -4.7" stroke="#dfe8df" stroke-width="0.9" stroke-dasharray="1.1 0.7" fill="none"/>
<path d="M424.0 268.0 l6.8 -4.2" stroke="#dfe8df" stroke-width="0.9" stroke-dasharray="1.1 0.7" fill="none"/>
<path d="M425.8 269.3 l6.8 -4.2" stroke="#dfe8df" stroke-width="0.9" stroke-dasharray="1.1 0.7" fill="none"/>
<path d="M243.0 283.0 l11.9 -7.3" stroke="#dfe8df" stroke-width="0.9" stroke-dasharray="1.1 0.7" fill="none"/>
<path d="M244.8 284.3 l11.9 -7.3" stroke="#dfe8df" stroke-width="0.9" stroke-dasharray="1.1 0.7" fill="none"/>
<path d="M246.6 285.6 l11.9 -7.3" stroke="#dfe8df" stroke-width="0.9" stroke-dasharray="1.1 0.7" fill="none"/>
<path d="M281.0 257.0 l7.6 -4.7" stroke="#dfe8df" stroke-width="0.9" stroke-dasharray="1.1 0.7" fill="none"/>
<path d="M282.8 258.3 l7.6 -4.7" stroke="#dfe8df" stroke-width="0.9" stroke-dasharray="1.1 0.7" fill="none"/>
<path d="M306.0 287.0 l10.2 -6.2" stroke="#dfe8df" stroke-width="0.9" stroke-dasharray="1.1 0.7" fill="none"/>
<path d="M307.8 288.3 l10.2 -6.2" stroke="#dfe8df" stroke-width="0.9" stroke-dasharray="1.1 0.7" fill="none"/>
<path d="M276.0 302.0 l6.8 -4.2" stroke="#dfe8df" stroke-width="0.9" stroke-dasharray="1.1 0.7" fill="none"/>
<path d="M277.8 303.3 l6.8 -4.2" stroke="#dfe8df" stroke-width="0.9" stroke-dasharray="1.1 0.7" fill="none"/>
<path d="M388.0 136.0 l5.1 -3.1" stroke="#dfe8df" stroke-width="0.9" stroke-dasharray="1.1 0.7" fill="none"/>
<path d="M389.8 137.3 l5.1 -3.1" stroke="#dfe8df" stroke-width="0.9" stroke-dasharray="1.1 0.7" fill="none"/>
<path d="M283.0 179.0 l6.8 -4.2" stroke="#dfe8df" stroke-width="0.9" stroke-dasharray="1.1 0.7" fill="none"/>
<path d="M284.8 180.3 l6.8 -4.2" stroke="#dfe8df" stroke-width="0.9" stroke-dasharray="1.1 0.7" fill="none"/>
<path d="M312.0 182.0 l6.0 -3.6" stroke="#dfe8df" stroke-width="0.9" stroke-dasharray="1.1 0.7" fill="none"/>
<path d="M313.8 183.3 l6.0 -3.6" stroke="#dfe8df" stroke-width="0.9" stroke-dasharray="1.1 0.7" fill="none"/>
<path d="M403.0 299.0 l4.1 2.9" stroke="#dfe8df" stroke-width="0.9" stroke-dasharray="1.1 0.7" fill="none"/>
<path d="M500.0 178.0 l6.8 -4.2" stroke="#dfe8df" stroke-width="0.9" stroke-dasharray="1.1 0.7" fill="none"/>
<path d="M501.8 179.3 l6.8 -4.2" stroke="#dfe8df" stroke-width="0.9" stroke-dasharray="1.1 0.7" fill="none"/>
<path d="M515.0 200.0 l4.2 -2.6" stroke="#dfe8df" stroke-width="0.9" stroke-dasharray="1.1 0.7" fill="none"/>
<path d="M209.7 288.6 l23.8 -14.6" stroke="#dfe8df" stroke-width="0.9" stroke-dasharray="1.1 0.7" fill="none"/>
<path d="M212.3 290.5 l23.8 -14.6" stroke="#dfe8df" stroke-width="0.9" stroke-dasharray="1.1 0.7" fill="none"/>
<path d="M214.9 292.4 l23.8 -14.6" stroke="#dfe8df" stroke-width="0.9" stroke-dasharray="1.1 0.7" fill="none"/>
<path d="M262.0 290.0 l15.3 -9.4" stroke="#dfe8df" stroke-width="0.9" stroke-dasharray="1.1 0.7" fill="none"/>
<path d="M264.4 291.8 l15.3 -9.4" stroke="#dfe8df" stroke-width="0.9" stroke-dasharray="1.1 0.7" fill="none"/>
<ellipse cx="423.2" cy="152.2" rx="2.4" ry="1.9" fill="#f0bc58"/>
<ellipse cx="432.2" cy="157.5" rx="2.4" ry="1.9" fill="#f0bc58"/>
<ellipse cx="420.2" cy="162.5" rx="2.4" ry="1.9" fill="#f0bc58"/>
<ellipse cx="424.0" cy="168.9" rx="2.4" ry="1.9" fill="#f0bc58"/>
<ellipse cx="463.4" cy="181.4" rx="2.4" ry="1.9" fill="#f0bc58"/>
<ellipse cx="452.9" cy="186.3" rx="2.4" ry="1.9" fill="#f0bc58"/>
<ellipse cx="443.0" cy="191.3" rx="2.4" ry="1.9" fill="#f0bc58"/>
<ellipse cx="447.0" cy="195.7" rx="2.4" ry="1.9" fill="#f0bc58"/>
<ellipse cx="490.6" cy="202.6" rx="2.4" ry="1.9" fill="#f0bc58"/>
<ellipse cx="482.1" cy="207.6" rx="2.4" ry="1.9" fill="#f0bc58"/>
<ellipse cx="382.3" cy="283.1" rx="2.4" ry="1.9" fill="#f0bc58"/>
<ellipse cx="390.6" cy="284.3" rx="2.4" ry="1.9" fill="#f0bc58"/>
<ellipse cx="398.2" cy="286.1" rx="2.4" ry="1.9" fill="#f0bc58"/>
<ellipse cx="383.5" cy="287.8" rx="2.4" ry="1.9" fill="#f0bc58"/>
<ellipse cx="391.7" cy="291.3" rx="2.4" ry="1.9" fill="#f0bc58"/>
<ellipse cx="464.3" cy="279.5" rx="2.4" ry="1.9" fill="#f0bc58"/>
<ellipse cx="455.0" cy="257.0" rx="2.4" ry="1.9" fill="#f0bc58"/>
<ellipse cx="285.9" cy="194.1" rx="2.4" ry="1.9" fill="#f0bc58"/>
<ellipse cx="376.0" cy="178.0" rx="2.4" ry="1.9" fill="#f0bc58"/>
<ellipse cx="323.0" cy="202.0" rx="2.4" ry="1.9" fill="#f0bc58"/>
<text transform="translate(187,275) rotate(-31)" font-family="Liberation Sans, sans-serif" font-size="5.5" fill="#e8f0e8" textLength="16">U2#4</text>
<text transform="translate(274,334.5) rotate(-31)" font-family="Liberation Sans, sans-serif" font-size="5.5" fill="#e8f0e8" textLength="14">U2#4</text>
<polygon points="207.1,258.5 210.0,260.6 202.9,264.9 200.0,262.8" fill="#f4f4f4" stroke="#f4f4f4" stroke-width="0.35" />
<polygon points="294.9,321.1 297.8,323.2 290.7,327.5 287.8,325.4" fill="#f4f4f4" stroke="#f4f4f4" stroke-width="0.35" />
<polygon points="309.7,200.7 382.0,253.3 382.0,257.5 309.7,204.9" fill="#141414" stroke="#141414" stroke-width="0.35" />
<polygon points="382.0,253.3 459.7,206.7 459.7,210.9 382.0,257.5" fill="#1e1e20" stroke="#1e1e20" stroke-width="0.35" />
<polygon points="387.0,153.3 459.7,206.7 382.0,253.3 309.7,200.7" fill="#2b2b2b" stroke="#2b2b2b" stroke-width="0.35" />
<ellipse cx="321.5" cy="201.5" rx="3.3" ry="2.2" fill="#fff" stroke="#0c0c0c" stroke-width="0.7"/>
<polygon points="186.7,243.3 225.0,268.3 225.0,272.3 186.7,247.3" fill="#141414" stroke="#141414" stroke-width="0.35" />
<polygon points="225.0,268.3 285.0,235.0 285.0,239.0 225.0,272.3" fill="#1e1e20" stroke="#1e1e20" stroke-width="0.35" />
<polygon points="246.7,206.7 285.0,235.0 225.0,268.3 186.7,243.3" fill="#2b2b2b" stroke="#2b2b2b" stroke-width="0.35" />
<ellipse cx="245.8" cy="209.5" rx="2.2" ry="1.6" fill="#fff" stroke="#0c0c0c" stroke-width="0.7"/>
<polygon points="274.9,307.4 311.7,334.3 311.7,338.3 274.9,311.4" fill="#141414" stroke="#141414" stroke-width="0.35" />
<polygon points="311.7,334.3 371.1,296.8 371.1,300.8 311.7,338.3" fill="#1e1e20" stroke="#1e1e20" stroke-width="0.35" />
<polygon points="334.3,269.7 371.1,296.8 311.7,334.3 274.9,307.4" fill="#2b2b2b" stroke="#2b2b2b" stroke-width="0.35" />
<ellipse cx="333.9" cy="272.6" rx="2.2" ry="1.6" fill="#fff" stroke="#0c0c0c" stroke-width="0.7"/>
</g>
<g id="ui">
<rect x="0.00" y="0.00" width="606.00" height="1.00" fill="#5a625a" />
<rect x="0.00" y="1.00" width="606.00" height="17.60" fill="#ffffff" />
<rect x="0.00" y="18.60" width="606.00" height="1.20" fill="#9a9a9a" />
<rect x="0.00" y="19.80" width="606.00" height="30.90" fill="#f0f0f0" />
<rect x="0.00" y="50.70" width="606.00" height="1.80" fill="#ffffff" />
<rect x="0.00" y="1.00" width="2.00" height="51.50" fill="#e4e4e4" />
<rect x="0.00" y="52.50" width="2.10" height="363.20" fill="#484848" />
<rect x="0.00" y="1.00" width="0.70" height="417.00" fill="#8c8c8c" />
<rect x="604.00" y="19.80" width="1.00" height="32.70" fill="#fafafa" />
<rect x="605.00" y="1.00" width="1.00" height="51.50" fill="#9c9c9c" />
<rect x="603.90" y="52.50" width="1.10" height="364.30" fill="#ffffff" />
<rect x="605.00" y="52.50" width="1.00" height="365.50" fill="#727272" />
<rect x="2.00" y="415.70" width="603.00" height="1.10" fill="#ffffff" />
<rect x="0.00" y="416.80" width="606.00" height="1.20" fill="#9a9e92" />
<path d="M145.00 417.70 L260.00 417.70" stroke="#6a6a6a" stroke-width="0.70" fill="none"/>
<path d="M390.00 417.70 L470.00 417.70" stroke="#6a6a6a" stroke-width="0.70" fill="none"/>
<path d="M560.00 417.70 L600.00 417.70" stroke="#6a6a6a" stroke-width="0.70" fill="none"/>
<rect x="5.60" y="5.90" width="7.80" height="6.60" fill="#eef0ee" stroke="#8a96a2" stroke-width="0.6"/>
<rect x="6.80" y="7.00" width="2.80" height="4.30" fill="#2f8f5f" />
<rect x="10.40" y="7.00" width="1.80" height="2.40" fill="#3a5a9a" />
<rect x="10.40" y="10.00" width="1.80" height="1.30" fill="#9ab0a0" />
<text x="17.60" y="11.90" font-size="7.80" fill="#101010" textLength="82.90" lengthAdjust="spacingAndGlyphs">Real PCB Assembly Viewer</text>
<path d="M534.90 9.30 L540.70 9.30" stroke="#202020" stroke-width="0.90" fill="none"/>
<rect x="561.60" y="6.10" width="5.60" height="5.60" fill="none" stroke="#202020" stroke-width="0.9"/>
<path d="M588.60 5.90 L595.00 11.90" stroke="#202020" stroke-width="0.90" fill="none"/>
<path d="M595.00 5.90 L588.60 11.90" stroke="#202020" stroke-width="0.90" fill="none"/>
<path d="M6.60 22.50 L6.60 31.00" stroke="#c8c8c8" stroke-width="0.80" fill="none"/>
<text x="12.00" y="29.60" font-size="8.60" fill="#161616" textLength="10.60" lengthAdjust="spacingAndGlyphs">File</text>
<text x="32.20" y="29.60" font-size="8.60" fill="#161616" textLength="15.50" lengthAdjust="spacingAndGlyphs">View</text>
<text x="84.20" y="29.60" font-size="8.60" fill="#161616" textLength="14.30" lengthAdjust="spacingAndGlyphs">Help</text>
<path d="M5.80 36.50 L5.80 49.00" stroke="#c8c8c8" stroke-width="0.80" fill="none"/>
<g><polygon points="10.1,40.6 15.6,37.7 21.2,40.9 21.2,46.9 15.9,49.8 10.1,46.7" fill="#12a012"/><polygon points="10.1,40.6 15.6,37.7 21.2,40.9 15.9,43.8" fill="#22b822"/><polygon points="12.5,40.3 15.5,38.8 17.5,39.8 14.5,41.4" fill="#8fe88f"/><polygon points="10.1,40.6 15.9,43.8 15.9,49.8 10.1,46.7" fill="#1cae1c"/><polygon points="15.9,43.8 21.2,40.9 21.2,46.9 15.9,49.8" fill="#0a860a"/><rect x="16.4" y="43.8" width="5.8" height="5.8" fill="#1236e6"/><rect x="17.8" y="44.5" width="3.1" height="2.4" fill="#ffffff"/><rect x="19" y="48" width="2.1" height="1.6" fill="#e8eeff"/></g>
<g transform="translate(33.5,43.9) rotate(40.6)"><rect x="-6" y="-3.1" width="12" height="6" fill="#e8f0f4"/><rect x="-6" y="-3.3" width="12" height="0.9" fill="#6a6a72"/><rect x="-6" y="-2.5" width="12" height="2.6" fill="#f4c414"/><path d="M-4.2 -2.5v1.6M-2.1 -2.5v1.6M0 -2.5v1.6M2.1 -2.5v1.6M4.2 -2.5v1.6" stroke="#b07808" stroke-width="0.8"/><path d="M-6 1.9 L6 1.9" stroke="#e00814" stroke-width="1.9"/><path d="M-3 1.9 h0.01 M3 1.9 h0.01" stroke="#e00814" stroke-width="2.6" stroke-linecap="round"/><rect x="-6" y="2.8" width="12" height="0.6" fill="#6a4a4a"/></g>
<polygon points="45.2,38.6 52.6,42.3 50.2,43.6 53.5,47 52,48.3 48.8,44.8 47.2,46.6" fill="#f4c020" stroke="#7a6a58" stroke-width="0.7"/>
<rect x="53.30" y="20.80" width="26.20" height="13.00" fill="#ffffff" stroke="#8c8c8c" stroke-width="0.7"/>
<text x="58.30" y="29.60" font-size="8.60" fill="#161616" textLength="16.60" lengthAdjust="spacingAndGlyphs">Tools</text>
<rect x="53.30" y="32.60" width="208.20" height="57.60" fill="#ffffff" stroke="#a8a8a8" stroke-width="0.7"/>
<rect x="54.20" y="33.40" width="24.40" height="1.20" fill="#ffffff" />
<rect x="55.30" y="34.20" width="16.30" height="55.30" fill="#f0f0f0" />
<text x="74.60" y="42.80" font-size="8.60" fill="#161616" textLength="51.00" lengthAdjust="spacingAndGlyphs">Component List</text>
<path d="M74.60 44.00 L79.30 44.00" stroke="#1a1a1a" stroke-width="0.60" fill="none"/>
<text x="74.60" y="57.80" font-size="8.60" fill="#161616" textLength="26.70" lengthAdjust="spacingAndGlyphs">Measure</text>
<path d="M74.60 59.00 L80.60 59.00" stroke="#1a1a1a" stroke-width="0.60" fill="none"/>
<g transform="translate(62.6,55.3) rotate(40.6)"><rect x="-6" y="-3.1" width="12" height="6" fill="#e8f0f4"/><rect x="-6" y="-3.3" width="12" height="0.9" fill="#6a6a72"/><rect x="-6" y="-2.5" width="12" height="2.6" fill="#f4c414"/><path d="M-4.2 -2.5v1.6M-2.1 -2.5v1.6M0 -2.5v1.6M2.1 -2.5v1.6M4.2 -2.5v1.6" stroke="#b07808" stroke-width="0.8"/><path d="M-6 1.9 L6 1.9" stroke="#e00814" stroke-width="1.9"/><path d="M-3 1.9 h0.01 M3 1.9 h0.01" stroke="#e00814" stroke-width="2.6" stroke-linecap="round"/><rect x="-6" y="2.8" width="12" height="0.6" fill="#6a4a4a"/></g>
<rect x="54.20" y="63.20" width="206.90" height="14.00" fill="#b2d6f4" stroke="#f80808" stroke-width="1.8"/>
<text x="74.60" y="72.80" font-size="8.60" fill="#101010" textLength="46.80" lengthAdjust="spacingAndGlyphs">Board X/Y Cut</text>
<text x="74.60" y="86.60" font-size="8.60" fill="#161616" textLength="162.10" lengthAdjust="spacingAndGlyphs">Create 3D Geometry by using Component Outline</text>
<path d="M158.3 77.5 L158.3 103.6 L89.6 103.6 L89.6 125" stroke="#f80808" stroke-width="1.9" fill="none"/>
<polygon points="86.6,123 92.6,123 89.6,129" fill="#f80808"/>
<rect x="10.10" y="130.60" width="160.00" height="213.00" fill="#ffffff" stroke="#f80808" stroke-width="2"/>
<rect x="11.20" y="148.10" width="156.00" height="194.00" fill="#f0f0f0" />
<text x="15.30" y="141.60" font-size="8.00" fill="#101010" textLength="44.40" lengthAdjust="spacingAndGlyphs">Board X/Y Cut</text>
<path d="M157.20 135.80 L163.00 141.60" stroke="#202020" stroke-width="0.80" fill="none"/>
<path d="M163.00 135.80 L157.20 141.60" stroke="#202020" stroke-width="0.80" fill="none"/>
<rect x="17.20" y="159.00" width="144.80" height="20.50" fill="none" stroke="#d0d0d0" stroke-width="0.9"/>
<rect x="20.50" y="156.00" width="32.50" height="6.00" fill="#f0f0f0" />
<text x="22.00" y="161.20" font-size="7.80" fill="#161616" textLength="29.50" lengthAdjust="spacingAndGlyphs">Slice Plane</text>
<circle cx="24.8" cy="169.2" r="2.9" fill="#fff"/>
<path d="M22.60 171.40 a3.1 3.1 0 0 1 4.4 -4.4" stroke="#4a4a4a" stroke-width="1" fill="none"/>
<path d="M22.60 171.40 a3.1 3.1 0 0 0 4.4 -4.4" stroke="#d8d8d8" stroke-width="0.9" fill="none"/>
<circle cx="24.8" cy="169.2" r="1.25" fill="#000"/>
<circle cx="91.8" cy="169.2" r="2.9" fill="#fff"/>
<path d="M89.60 171.40 a3.1 3.1 0 0 1 4.4 -4.4" stroke="#4a4a4a" stroke-width="1" fill="none"/>
<path d="M89.60 171.40 a3.1 3.1 0 0 0 4.4 -4.4" stroke="#d8d8d8" stroke-width="0.9" fill="none"/>
<text x="31.90" y="172.00" font-size="7.80" fill="#161616" textLength="3.40" lengthAdjust="spacingAndGlyphs">X</text>
<text x="98.60" y="172.00" font-size="7.80" fill="#161616" textLength="3.70" lengthAdjust="spacingAndGlyphs">Y</text>
<rect x="30.90" y="165.30" width="5.60" height="8.00" fill="none" stroke="#444" stroke-width="0.5" stroke-dasharray="0.7 0.7"/>
<rect x="17.00" y="186.30" width="145.50" height="11.00" fill="#f6f6f6" />
<rect x="17.00" y="186.30" width="10.20" height="11.00" fill="#f0f0f0" />
<path d="M17.00 186.70 L27.20 186.70" stroke="#ffffff" stroke-width="0.90" fill="none"/>
<path d="M17.40 186.30 L17.40 197.30" stroke="#ffffff" stroke-width="0.90" fill="none"/>
<path d="M17.00 196.80 L27.20 196.80" stroke="#6a6a6a" stroke-width="1.00" fill="none"/>
<path d="M26.70 186.30 L26.70 197.30" stroke="#6a6a6a" stroke-width="1.00" fill="none"/>
<path d="M18.00 195.90 L26.20 195.90" stroke="#c0c0c0" stroke-width="0.80" fill="none"/>
<path d="M25.80 187.30 L25.80 196.30" stroke="#c0c0c0" stroke-width="0.80" fill="none"/>
<rect x="152.60" y="186.30" width="10.00" height="11.00" fill="#f0f0f0" />
<path d="M152.60 186.70 L162.60 186.70" stroke="#ffffff" stroke-width="0.90" fill="none"/>
<path d="M153.00 186.30 L153.00 197.30" stroke="#ffffff" stroke-width="0.90" fill="none"/>
<path d="M152.60 196.80 L162.60 196.80" stroke="#6a6a6a" stroke-width="1.00" fill="none"/>
<path d="M162.10 186.30 L162.10 197.30" stroke="#6a6a6a" stroke-width="1.00" fill="none"/>
<path d="M153.60 195.90 L161.60 195.90" stroke="#c0c0c0" stroke-width="0.80" fill="none"/>
<path d="M161.20 187.30 L161.20 196.30" stroke="#c0c0c0" stroke-width="0.80" fill="none"/>
<rect x="83.70" y="186.30" width="10.30" height="11.00" fill="#f0f0f0" />
<path d="M83.70 186.70 L94.00 186.70" stroke="#ffffff" stroke-width="0.90" fill="none"/>
<path d="M84.10 186.30 L84.10 197.30" stroke="#ffffff" stroke-width="0.90" fill="none"/>
<path d="M83.70 196.80 L94.00 196.80" stroke="#6a6a6a" stroke-width="1.00" fill="none"/>
<path d="M93.50 186.30 L93.50 197.30" stroke="#6a6a6a" stroke-width="1.00" fill="none"/>
<path d="M84.70 195.90 L93.00 195.90" stroke="#c0c0c0" stroke-width="0.80" fill="none"/>
<path d="M92.60 187.30 L92.60 196.30" stroke="#c0c0c0" stroke-width="0.80" fill="none"/>
<polygon points="20.3,191.8 23.2,189.6 23.2,194" fill="#000"/>
<polygon points="159.4,191.8 156.5,189.6 156.5,194" fill="#000"/>
<text x="16.50" y="212.70" font-size="7.80" fill="#161616" textLength="39.50" lengthAdjust="spacingAndGlyphs">Slider Offset :</text>
<rect x="58.60" y="204.40" width="103.60" height="11.80" fill="#ffffff" />
<text x="144.40" y="211.70" font-size="7.80" fill="#161616" textLength="16.00" lengthAdjust="spacingAndGlyphs">1.000</text>
<text x="16.50" y="233.10" font-size="7.80" fill="#161616" textLength="7.80" lengthAdjust="spacingAndGlyphs">X :</text>
<rect x="26.40" y="222.90" width="55.40" height="12.30" fill="#ffffff" />
<text x="63.00" y="230.30" font-size="7.80" fill="#161616" textLength="17.00" lengthAdjust="spacingAndGlyphs">0.000</text>
<text x="97.00" y="233.10" font-size="7.80" fill="#161616" textLength="7.70" lengthAdjust="spacingAndGlyphs">Y :</text>
<rect x="106.70" y="222.90" width="55.40" height="12.30" fill="#ffffff" />
<text x="143.50" y="230.30" font-size="7.80" fill="#161616" textLength="16.90" lengthAdjust="spacingAndGlyphs">0.000</text>
<rect x="17.00" y="242.90" width="145.50" height="13.60" fill="#f0f0f0" />
<path d="M17.00 243.30 L162.50 243.30" stroke="#ffffff" stroke-width="0.90" fill="none"/>
<path d="M17.40 242.90 L17.40 256.50" stroke="#ffffff" stroke-width="0.90" fill="none"/>
<path d="M17.00 256.00 L162.50 256.00" stroke="#6a6a6a" stroke-width="1.00" fill="none"/>
<path d="M162.00 242.90 L162.00 256.50" stroke="#6a6a6a" stroke-width="1.00" fill="none"/>
<path d="M18.00 255.10 L161.50 255.10" stroke="#c0c0c0" stroke-width="0.80" fill="none"/>
<path d="M161.10 243.90 L161.10 255.50" stroke="#c0c0c0" stroke-width="0.80" fill="none"/>
<text x="71.30" y="251.60" font-size="7.80" fill="#161616" textLength="36.50" lengthAdjust="spacingAndGlyphs">Pick Location</text>
<rect x="17.00" y="262.20" width="6.70" height="6.70" fill="#ffffff" />
<path d="M17.00 262.60 L23.70 262.60" stroke="#707070" stroke-width="0.90" fill="none"/>
<path d="M17.40 262.20 L17.40 268.90" stroke="#707070" stroke-width="0.90" fill="none"/>
<path d="M17.00 268.60 L23.70 268.60" stroke="#e8e8e8" stroke-width="0.70" fill="none"/>
<path d="M23.40 262.20 L23.40 268.90" stroke="#e8e8e8" stroke-width="0.70" fill="none"/>
<text x="27.70" y="267.80" font-size="7.80" fill="#161616" textLength="77.10" lengthAdjust="spacingAndGlyphs">2D View (Lock 3D Rotation)</text>
<rect x="17.00" y="277.20" width="6.70" height="6.70" fill="#ffffff" />
<path d="M17.00 277.60 L23.70 277.60" stroke="#707070" stroke-width="0.90" fill="none"/>
<path d="M17.40 277.20 L17.40 283.90" stroke="#707070" stroke-width="0.90" fill="none"/>
<path d="M17.00 283.60 L23.70 283.60" stroke="#e8e8e8" stroke-width="0.70" fill="none"/>
<path d="M23.40 277.20 L23.40 283.90" stroke="#e8e8e8" stroke-width="0.70" fill="none"/>
<text x="27.20" y="283.70" font-size="7.80" fill="#161616" textLength="55.40" lengthAdjust="spacingAndGlyphs">Display across Vias.</text>
<rect x="17.00" y="292.90" width="6.70" height="6.70" fill="#ffffff" />
<path d="M17.00 293.30 L23.70 293.30" stroke="#707070" stroke-width="0.90" fill="none"/>
<path d="M17.40 292.90 L17.40 299.60" stroke="#707070" stroke-width="0.90" fill="none"/>
<path d="M17.00 299.30 L23.70 299.30" stroke="#e8e8e8" stroke-width="0.70" fill="none"/>
<path d="M23.40 292.90 L23.40 299.60" stroke="#e8e8e8" stroke-width="0.70" fill="none"/>
<path d="M18.5 296.3 l1.5 1.6 l2.6 -3.2" stroke="#000" stroke-width="1.2" fill="none"/>
<text x="27.70" y="298.90" font-size="7.80" fill="#161616" textLength="68.80" lengthAdjust="spacingAndGlyphs">Allow component cutting</text>
<rect x="17.00" y="308.30" width="6.70" height="6.70" fill="#f4f4f4" />
<path d="M17.00 308.70 L23.70 308.70" stroke="#707070" stroke-width="0.90" fill="none"/>
<path d="M17.40 308.30 L17.40 315.00" stroke="#707070" stroke-width="0.90" fill="none"/>
<path d="M17.00 314.70 L23.70 314.70" stroke="#e8e8e8" stroke-width="0.70" fill="none"/>
<path d="M23.40 308.30 L23.40 315.00" stroke="#e8e8e8" stroke-width="0.70" fill="none"/>
<path d="M18.5 311.7 l1.5 1.6 l2.6 -3.2" stroke="#a0a0a0" stroke-width="1.2" fill="none"/>
<text x="27.70" y="314.80" font-size="7.80" fill="#a4a4a4" textLength="33.30" lengthAdjust="spacingAndGlyphs">Through Via</text>
<rect x="74.30" y="308.30" width="6.70" height="6.70" fill="#f4f4f4" />
<path d="M74.30 308.70 L81.00 308.70" stroke="#707070" stroke-width="0.90" fill="none"/>
<path d="M74.70 308.30 L74.70 315.00" stroke="#707070" stroke-width="0.90" fill="none"/>
<path d="M74.30 314.70 L81.00 314.70" stroke="#e8e8e8" stroke-width="0.70" fill="none"/>
<path d="M80.70 308.30 L80.70 315.00" stroke="#e8e8e8" stroke-width="0.70" fill="none"/>
<path d="M75.8 311.7 l1.5 1.6 l2.6 -3.2" stroke="#a0a0a0" stroke-width="1.2" fill="none"/>
<text x="84.60" y="314.80" font-size="7.80" fill="#a4a4a4" textLength="23.10" lengthAdjust="spacingAndGlyphs">Blind Via</text>
<rect x="120.50" y="308.30" width="6.70" height="6.70" fill="#f4f4f4" />
<path d="M120.50 308.70 L127.20 308.70" stroke="#707070" stroke-width="0.90" fill="none"/>
<path d="M120.90 308.30 L120.90 315.00" stroke="#707070" stroke-width="0.90" fill="none"/>
<path d="M120.50 314.70 L127.20 314.70" stroke="#e8e8e8" stroke-width="0.70" fill="none"/>
<path d="M126.90 308.30 L126.90 315.00" stroke="#e8e8e8" stroke-width="0.70" fill="none"/>
<path d="M122.0 311.7 l1.5 1.6 l2.6 -3.2" stroke="#a0a0a0" stroke-width="1.2" fill="none"/>
<text x="131.20" y="314.80" font-size="7.80" fill="#a4a4a4" textLength="27.70" lengthAdjust="spacingAndGlyphs">Buried Via</text>
<rect x="17.30" y="323.20" width="44.40" height="13.40" fill="#f0f0f0" />
<path d="M17.30 323.60 L61.70 323.60" stroke="#ffffff" stroke-width="0.90" fill="none"/>
<path d="M17.70 323.20 L17.70 336.60" stroke="#ffffff" stroke-width="0.90" fill="none"/>
<path d="M17.30 336.10 L61.70 336.10" stroke="#6a6a6a" stroke-width="1.00" fill="none"/>
<path d="M61.20 323.20 L61.20 336.60" stroke="#6a6a6a" stroke-width="1.00" fill="none"/>
<path d="M18.30 335.20 L60.70 335.20" stroke="#c0c0c0" stroke-width="0.80" fill="none"/>
<path d="M60.30 324.20 L60.30 335.60" stroke="#c0c0c0" stroke-width="0.80" fill="none"/>
<rect x="16.80" y="322.70" width="45.40" height="14.40" fill="none" stroke="#505050" stroke-width="1"/>
<text x="31.40" y="331.50" font-size="7.80" fill="#161616" textLength="16.00" lengthAdjust="spacingAndGlyphs">Apply</text>
<rect x="67.70" y="323.00" width="44.80" height="13.70" fill="#f0f0f0" />
<path d="M67.70 323.40 L112.50 323.40" stroke="#ffffff" stroke-width="0.90" fill="none"/>
<path d="M68.10 323.00 L68.10 336.70" stroke="#ffffff" stroke-width="0.90" fill="none"/>
<path d="M67.70 336.20 L112.50 336.20" stroke="#6a6a6a" stroke-width="1.00" fill="none"/>
<path d="M112.00 323.00 L112.00 336.70" stroke="#6a6a6a" stroke-width="1.00" fill="none"/>
<path d="M68.70 335.30 L111.50 335.30" stroke="#c0c0c0" stroke-width="0.80" fill="none"/>
<path d="M111.10 324.00 L111.10 335.70" stroke="#c0c0c0" stroke-width="0.80" fill="none"/>
<text x="80.80" y="331.50" font-size="7.80" fill="#161616" textLength="16.90" lengthAdjust="spacingAndGlyphs">Reset</text>
<rect x="118.00" y="323.00" width="44.50" height="13.70" fill="#f0f0f0" />
<path d="M118.00 323.40 L162.50 323.40" stroke="#ffffff" stroke-width="0.90" fill="none"/>
<path d="M118.40 323.00 L118.40 336.70" stroke="#ffffff" stroke-width="0.90" fill="none"/>
<path d="M118.00 336.20 L162.50 336.20" stroke="#6a6a6a" stroke-width="1.00" fill="none"/>
<path d="M162.00 323.00 L162.00 336.70" stroke="#6a6a6a" stroke-width="1.00" fill="none"/>
<path d="M119.00 335.30 L161.50 335.30" stroke="#c0c0c0" stroke-width="0.80" fill="none"/>
<path d="M161.10 324.00 L161.10 335.70" stroke="#c0c0c0" stroke-width="0.80" fill="none"/>
<text x="131.50" y="331.50" font-size="7.80" fill="#161616" textLength="15.70" lengthAdjust="spacingAndGlyphs">Close</text>
</g>
</svg>
</body></html>
